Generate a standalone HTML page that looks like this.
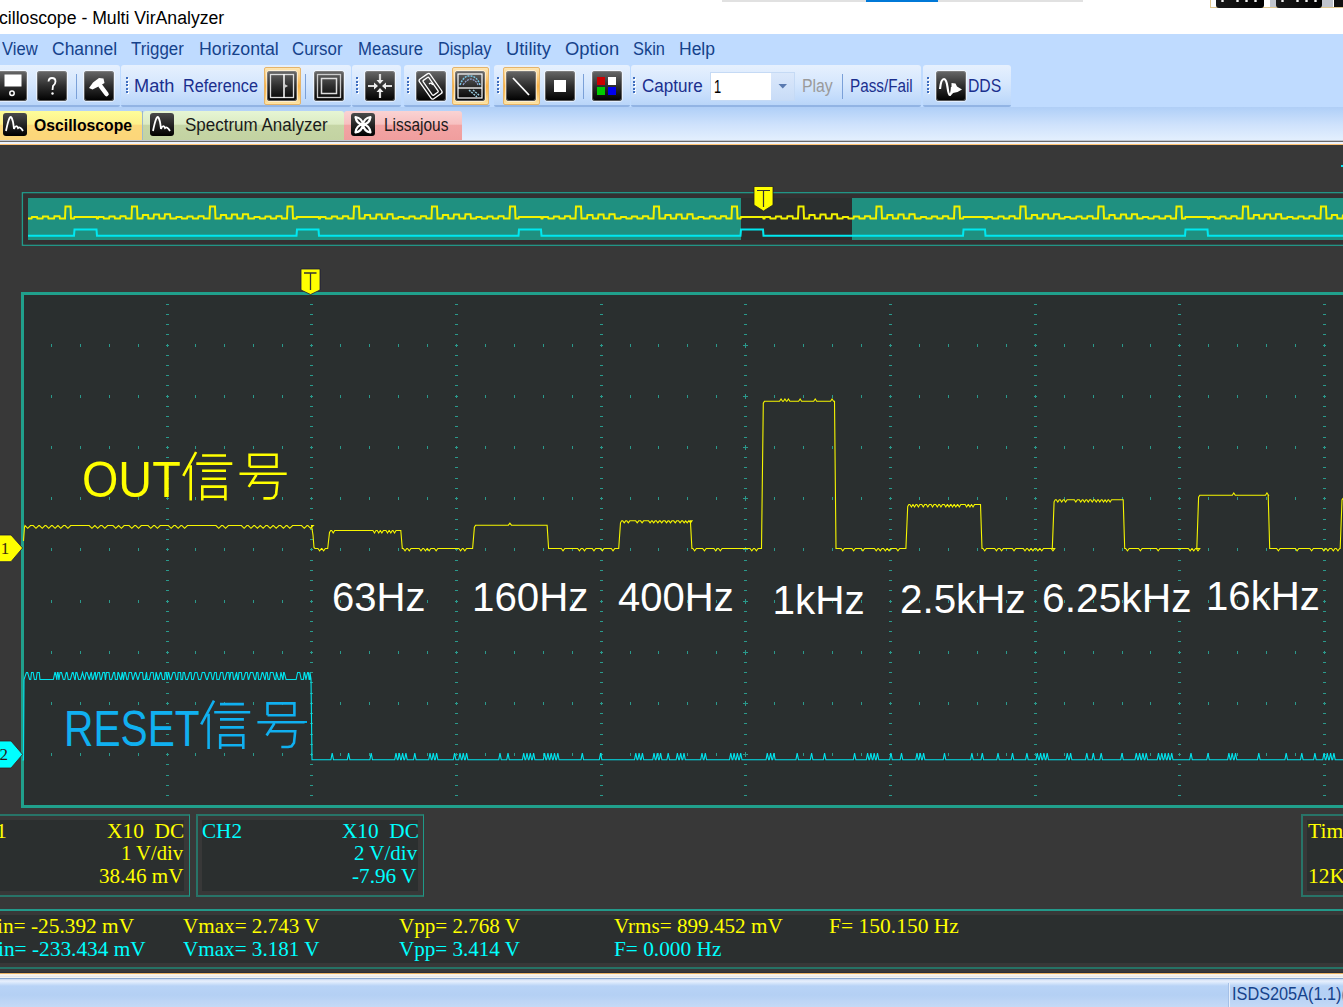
<!DOCTYPE html>
<html><head><meta charset="utf-8"><style>
html,body{margin:0;padding:0;}
body{width:1343px;height:1007px;overflow:hidden;position:relative;background:#fff;}
.t{position:absolute;white-space:nowrap;line-height:1;}
.r{position:absolute;}
</style></head><body>
<div class="t" style="left:-1.48px;top:8.56px;font-family:'Liberation Sans', sans-serif;font-size:18px;color:#000;transform:scaleX(0.9803);transform-origin:0 0;">cilloscope - Multi VirAnalyzer</div><div class="r" style="left:722px;top:0px;width:361px;height:2px;background:#e1e1e1;"></div><div class="r" style="left:866px;top:0px;width:72px;height:2px;background:#0078d7;"></div><div class="r" style="left:1210px;top:0px;width:133px;height:8px;background:#fff;border:1px solid #e0c890;border-top:none;box-sizing:border-box"></div><div class="r" style="left:1216px;top:0px;width:48px;height:8px;background:linear-gradient(90deg,#1a1a1a,#000);border-radius:0 0 3px 3px"></div><div class="r" style="left:1270px;top:0px;width:6px;height:7px;background:#c0c4cc;"></div><div class="r" style="left:1276px;top:0px;width:46px;height:8px;background:linear-gradient(90deg,#1a1a1a,#000);border-radius:0 0 3px 3px"></div><div class="r" style="left:1322px;top:0px;width:11px;height:7px;background:#c0c4cc;"></div><div class="r" style="left:1334px;top:0px;width:9px;height:7px;background:#111;"></div><div class="r" style="left:1220.5px;top:0px;width:3px;height:2px;background:#fff;border-radius:50%"></div><div class="r" style="left:1235.5px;top:0px;width:3px;height:2px;background:#fff;border-radius:50%"></div><div class="r" style="left:1244.5px;top:0px;width:3px;height:2px;background:#fff;border-radius:50%"></div><div class="r" style="left:1253.5px;top:0px;width:3px;height:2px;background:#fff;border-radius:50%"></div><div class="r" style="left:1280.5px;top:0px;width:3px;height:2px;background:#fff;border-radius:50%"></div><div class="r" style="left:1295.5px;top:0px;width:3px;height:2px;background:#fff;border-radius:50%"></div><div class="r" style="left:1304.5px;top:0px;width:3px;height:2px;background:#fff;border-radius:50%"></div><div class="r" style="left:1313.5px;top:0px;width:3px;height:2px;background:#fff;border-radius:50%"></div><div class="r" style="left:0px;top:34px;width:1343px;height:31px;background:#bfdbff;"></div><div class="t" style="left:2px;top:41.39px;font-family:'Liberation Sans', sans-serif;font-size:17.5px;color:#15428b;transform:scaleX(0.9474);transform-origin:0 0;">View</div><div class="t" style="left:52px;top:41.39px;font-family:'Liberation Sans', sans-serif;font-size:17.5px;color:#15428b;">Channel</div><div class="t" style="left:131px;top:41.39px;font-family:'Liberation Sans', sans-serif;font-size:17.5px;color:#15428b;transform:scaleX(0.9636);transform-origin:0 0;">Trigger</div><div class="t" style="left:198.99px;top:41.39px;font-family:'Liberation Sans', sans-serif;font-size:17.5px;color:#15428b;transform:scaleX(1.0130);transform-origin:0 0;">Horizontal</div><div class="t" style="left:292.04px;top:41.39px;font-family:'Liberation Sans', sans-serif;font-size:17.5px;color:#15428b;transform:scaleX(0.9615);transform-origin:0 0;">Cursor</div><div class="t" style="left:358.05px;top:41.39px;font-family:'Liberation Sans', sans-serif;font-size:17.5px;color:#15428b;transform:scaleX(0.9545);transform-origin:0 0;">Measure</div><div class="t" style="left:438.07px;top:41.39px;font-family:'Liberation Sans', sans-serif;font-size:17.5px;color:#15428b;transform:scaleX(0.9298);transform-origin:0 0;">Display</div><div class="t" style="left:505.95px;top:41.39px;font-family:'Liberation Sans', sans-serif;font-size:17.5px;color:#15428b;transform:scaleX(1.0476);transform-origin:0 0;">Utility</div><div class="t" style="left:564.95px;top:41.39px;font-family:'Liberation Sans', sans-serif;font-size:17.5px;color:#15428b;transform:scaleX(1.0500);transform-origin:0 0;">Option</div><div class="t" style="left:633.06px;top:41.39px;font-family:'Liberation Sans', sans-serif;font-size:17.5px;color:#15428b;transform:scaleX(0.9375);transform-origin:0 0;">Skin</div><div class="t" style="left:679px;top:41.39px;font-family:'Liberation Sans', sans-serif;font-size:17.5px;color:#15428b;">Help</div><div class="r" style="left:0px;top:65px;width:1343px;height:45px;background:#bfdbff;"></div><div class="r" style="left:-6px;top:65px;width:126px;height:41px;background:linear-gradient(#e6f0fe,#d6e7fd 45%,#c0dafb 85%,#b8d4f8);border-radius:3px"></div><div class="r" style="left:-6px;top:105px;width:126px;height:2px;background:#92b4e4;border-radius:0 0 3px 3px"></div><div class="r" style="left:121px;top:65px;width:230px;height:41px;background:linear-gradient(#e6f0fe,#d6e7fd 45%,#c0dafb 85%,#b8d4f8);border-radius:3px"></div><div class="r" style="left:121px;top:105px;width:230px;height:2px;background:#92b4e4;border-radius:0 0 3px 3px"></div><div class="r" style="left:352px;top:65px;width:49px;height:41px;background:linear-gradient(#e6f0fe,#d6e7fd 45%,#c0dafb 85%,#b8d4f8);border-radius:3px"></div><div class="r" style="left:352px;top:105px;width:49px;height:2px;background:#92b4e4;border-radius:0 0 3px 3px"></div><div class="r" style="left:404px;top:65px;width:86px;height:41px;background:linear-gradient(#e6f0fe,#d6e7fd 45%,#c0dafb 85%,#b8d4f8);border-radius:3px"></div><div class="r" style="left:404px;top:105px;width:86px;height:2px;background:#92b4e4;border-radius:0 0 3px 3px"></div><div class="r" style="left:494px;top:65px;width:136px;height:41px;background:linear-gradient(#e6f0fe,#d6e7fd 45%,#c0dafb 85%,#b8d4f8);border-radius:3px"></div><div class="r" style="left:494px;top:105px;width:136px;height:2px;background:#92b4e4;border-radius:0 0 3px 3px"></div><div class="r" style="left:631px;top:65px;width:290px;height:41px;background:linear-gradient(#e6f0fe,#d6e7fd 45%,#c0dafb 85%,#b8d4f8);border-radius:3px"></div><div class="r" style="left:631px;top:105px;width:290px;height:2px;background:#92b4e4;border-radius:0 0 3px 3px"></div><div class="r" style="left:923px;top:65px;width:88px;height:41px;background:linear-gradient(#e6f0fe,#d6e7fd 45%,#c0dafb 85%,#b8d4f8);border-radius:3px"></div><div class="r" style="left:923px;top:105px;width:88px;height:2px;background:#92b4e4;border-radius:0 0 3px 3px"></div><div class="r" style="left:126px;top:77px;width:2px;height:2px;background:#3f6ec0;box-shadow:1px 1px 0 #fff"></div><div class="r" style="left:126px;top:80.6px;width:2px;height:2px;background:#3f6ec0;box-shadow:1px 1px 0 #fff"></div><div class="r" style="left:126px;top:84.2px;width:2px;height:2px;background:#3f6ec0;box-shadow:1px 1px 0 #fff"></div><div class="r" style="left:126px;top:87.8px;width:2px;height:2px;background:#3f6ec0;box-shadow:1px 1px 0 #fff"></div><div class="r" style="left:126px;top:91.4px;width:2px;height:2px;background:#3f6ec0;box-shadow:1px 1px 0 #fff"></div><div class="r" style="left:356px;top:77px;width:2px;height:2px;background:#3f6ec0;box-shadow:1px 1px 0 #fff"></div><div class="r" style="left:356px;top:80.6px;width:2px;height:2px;background:#3f6ec0;box-shadow:1px 1px 0 #fff"></div><div class="r" style="left:356px;top:84.2px;width:2px;height:2px;background:#3f6ec0;box-shadow:1px 1px 0 #fff"></div><div class="r" style="left:356px;top:87.8px;width:2px;height:2px;background:#3f6ec0;box-shadow:1px 1px 0 #fff"></div><div class="r" style="left:356px;top:91.4px;width:2px;height:2px;background:#3f6ec0;box-shadow:1px 1px 0 #fff"></div><div class="r" style="left:407px;top:77px;width:2px;height:2px;background:#3f6ec0;box-shadow:1px 1px 0 #fff"></div><div class="r" style="left:407px;top:80.6px;width:2px;height:2px;background:#3f6ec0;box-shadow:1px 1px 0 #fff"></div><div class="r" style="left:407px;top:84.2px;width:2px;height:2px;background:#3f6ec0;box-shadow:1px 1px 0 #fff"></div><div class="r" style="left:407px;top:87.8px;width:2px;height:2px;background:#3f6ec0;box-shadow:1px 1px 0 #fff"></div><div class="r" style="left:407px;top:91.4px;width:2px;height:2px;background:#3f6ec0;box-shadow:1px 1px 0 #fff"></div><div class="r" style="left:497px;top:77px;width:2px;height:2px;background:#3f6ec0;box-shadow:1px 1px 0 #fff"></div><div class="r" style="left:497px;top:80.6px;width:2px;height:2px;background:#3f6ec0;box-shadow:1px 1px 0 #fff"></div><div class="r" style="left:497px;top:84.2px;width:2px;height:2px;background:#3f6ec0;box-shadow:1px 1px 0 #fff"></div><div class="r" style="left:497px;top:87.8px;width:2px;height:2px;background:#3f6ec0;box-shadow:1px 1px 0 #fff"></div><div class="r" style="left:497px;top:91.4px;width:2px;height:2px;background:#3f6ec0;box-shadow:1px 1px 0 #fff"></div><div class="r" style="left:633px;top:77px;width:2px;height:2px;background:#3f6ec0;box-shadow:1px 1px 0 #fff"></div><div class="r" style="left:633px;top:80.6px;width:2px;height:2px;background:#3f6ec0;box-shadow:1px 1px 0 #fff"></div><div class="r" style="left:633px;top:84.2px;width:2px;height:2px;background:#3f6ec0;box-shadow:1px 1px 0 #fff"></div><div class="r" style="left:633px;top:87.8px;width:2px;height:2px;background:#3f6ec0;box-shadow:1px 1px 0 #fff"></div><div class="r" style="left:633px;top:91.4px;width:2px;height:2px;background:#3f6ec0;box-shadow:1px 1px 0 #fff"></div><div class="r" style="left:927px;top:77px;width:2px;height:2px;background:#3f6ec0;box-shadow:1px 1px 0 #fff"></div><div class="r" style="left:927px;top:80.6px;width:2px;height:2px;background:#3f6ec0;box-shadow:1px 1px 0 #fff"></div><div class="r" style="left:927px;top:84.2px;width:2px;height:2px;background:#3f6ec0;box-shadow:1px 1px 0 #fff"></div><div class="r" style="left:927px;top:87.8px;width:2px;height:2px;background:#3f6ec0;box-shadow:1px 1px 0 #fff"></div><div class="r" style="left:927px;top:91.4px;width:2px;height:2px;background:#3f6ec0;box-shadow:1px 1px 0 #fff"></div><div class="r" style="left:-3px;top:71px;width:30px;height:30px;border-radius:3px;background:linear-gradient(#686868,#2e2e2e 50%,#000);box-shadow:0 0 0 1px rgba(140,140,140,.6) inset, 0 0 0 1px rgba(255,255,255,.55)"><svg width="30" height="30" style="position:absolute;left:0;top:0"><rect x="7.5" y="3.5" width="17" height="12" fill="#fff"/><circle cx="15" cy="22.3" r="2.2" fill="none" stroke="#fff" stroke-width="1.5"/></svg></div><div class="r" style="left:37px;top:71px;width:30px;height:30px;border-radius:3px;background:linear-gradient(#686868,#2e2e2e 50%,#000);box-shadow:0 0 0 1px rgba(140,140,140,.6) inset, 0 0 0 1px rgba(255,255,255,.55)"><svg width="30" height="30" style="position:absolute;left:0;top:0"><path d="M11.5 10.5 Q11.8 7 15 7 Q18.5 7 18.5 10.5 Q18.5 13 16 15 L15.5 19" fill="none" stroke="#fff" stroke-width="1.8"/><circle cx="15.5" cy="22.5" r="1.2" fill="#fff"/></svg></div><div class="r" style="left:75.5px;top:74px;width:1px;height:25px;background:#7aa0d8;"></div><div class="r" style="left:84px;top:71px;width:30px;height:30px;border-radius:3px;background:linear-gradient(#686868,#2e2e2e 50%,#000);box-shadow:0 0 0 1px rgba(140,140,140,.6) inset, 0 0 0 1px rgba(255,255,255,.55)"><svg width="30" height="30" style="position:absolute;left:0;top:0"><path d="M5 17 L9 11.5 L15 7 L19.5 7.5 L20.5 12 L14.5 15.5 L8.5 18.5 Z" fill="#fff"/><path d="M16.5 15 L22.5 23" stroke="#fff" stroke-width="4.5" stroke-linecap="round"/></svg></div><div class="t" style="left:134.36px;top:78.19px;font-family:'Liberation Sans', sans-serif;font-size:17.5px;color:#1b2f8e;transform:scaleX(1.0378);transform-origin:0 0;">Math</div><div class="t" style="left:183.47px;top:78.19px;font-family:'Liberation Sans', sans-serif;font-size:17.5px;color:#1b2f8e;transform:scaleX(0.9278);transform-origin:0 0;">Reference</div><div class="r" style="left:264px;top:67px;width:37px;height:38px;background:linear-gradient(#fde6b4,#fbc36a 35%,#f9b246 50%,#fbc768 75%,#fde4a6);border:1px solid #e6b46a;box-sizing:border-box;border-radius:2px"></div><div class="r" style="left:267px;top:71px;width:30px;height:30px;border-radius:3px;background:linear-gradient(#686868,#2e2e2e 50%,#000);box-shadow:0 0 0 1px rgba(140,140,140,.6) inset, 0 0 0 1px rgba(255,255,255,.55)"><svg width="30" height="30" style="position:absolute;left:0;top:0"><rect x="3.5" y="3.5" width="23" height="23" fill="none" stroke="#ddd" stroke-width="1.3"/><line x1="17" y1="3" x2="17" y2="27" stroke="#fff" stroke-width="1.5"/><path d="M17.5 13 L21 15 L17.5 17Z" fill="#ccc"/></svg></div><div class="r" style="left:305px;top:74px;width:1px;height:25px;background:#7aa0d8;"></div><div class="r" style="left:314px;top:71px;width:30px;height:30px;border-radius:3px;background:linear-gradient(#686868,#2e2e2e 50%,#000);box-shadow:0 0 0 1px rgba(140,140,140,.6) inset, 0 0 0 1px rgba(255,255,255,.55)"><svg width="30" height="30" style="position:absolute;left:0;top:0"><rect x="3.5" y="3.5" width="23" height="23" fill="none" stroke="#ccc" stroke-width="1.3"/><rect x="7.5" y="7.5" width="15" height="15" fill="none" stroke="#ddd" stroke-width="1.5"/></svg></div><div class="r" style="left:365px;top:71px;width:30px;height:30px;border-radius:3px;background:linear-gradient(#686868,#2e2e2e 50%,#000);box-shadow:0 0 0 1px rgba(140,140,140,.6) inset, 0 0 0 1px rgba(255,255,255,.55)"><svg width="30" height="30" style="position:absolute;left:0;top:0"><path d="M15 3 V10 M15 27 V20 M3 15 H10 M27 15 H20" stroke="#ddd" stroke-width="2.2"/><path d="M11.5 9 L15 13 L18.5 9Z M11.5 21 L15 17 L18.5 21Z M9 11.5 L13 15 L9 18.5Z M21 11.5 L17 15 L21 18.5Z" fill="#eee"/></svg></div><div class="r" style="left:416px;top:71px;width:30px;height:30px;border-radius:3px;background:linear-gradient(#686868,#2e2e2e 50%,#000);box-shadow:0 0 0 1px rgba(140,140,140,.6) inset, 0 0 0 1px rgba(255,255,255,.55)"><svg width="30" height="30" style="position:absolute;left:0;top:0" stroke="#fff" stroke-width="1.3" fill="none"><rect x="8" y="3" width="13" height="24" rx="2" transform="rotate(-35 15 15)"/><rect x="11" y="6" width="7" height="18" rx="1" transform="rotate(-35 15 15)"/><path d="M13 13 Q15 11 17 14" /></svg></div><div class="r" style="left:452px;top:67px;width:37px;height:38px;background:linear-gradient(#fde6b4,#fbc36a 35%,#f9b246 50%,#fbc768 75%,#fde4a6);border:1px solid #e6b46a;box-sizing:border-box;border-radius:2px"></div><div class="r" style="left:455px;top:71px;width:30px;height:30px;border-radius:3px;background:linear-gradient(#686868,#2e2e2e 50%,#000);box-shadow:0 0 0 1px rgba(140,140,140,.6) inset, 0 0 0 1px rgba(255,255,255,.55)"><svg width="30" height="30" style="position:absolute;left:0;top:0"><rect x="3" y="3" width="24" height="24" fill="none" stroke="#fff" stroke-width="1.2"/><path d="M5 14 Q9 4 15 5 Q22 5 25 14" stroke="#7cc8e8" stroke-width="1.5" fill="none" stroke-dasharray="2 1"/><path d="M8 14 Q12 8 16 8 Q21 9 23 14" stroke="#9ad" stroke-width="1.2" fill="none" stroke-dasharray="2 1"/><line x1="3" y1="17" x2="27" y2="17" stroke="#fff" stroke-width="1.3"/><path d="M14 19 L22 26 M18 19 L25 25" stroke="#9cd" stroke-width="1.5" stroke-dasharray="2 1"/></svg></div><div class="r" style="left:503px;top:67px;width:37px;height:38px;background:linear-gradient(#fde6b4,#fbc36a 35%,#f9b246 50%,#fbc768 75%,#fde4a6);border:1px solid #e6b46a;box-sizing:border-box;border-radius:2px"></div><div class="r" style="left:506px;top:71px;width:30px;height:30px;border-radius:3px;background:linear-gradient(#686868,#2e2e2e 50%,#000);box-shadow:0 0 0 1px rgba(140,140,140,.6) inset, 0 0 0 1px rgba(255,255,255,.55)"><svg width="30" height="30" style="position:absolute;left:0;top:0"><line x1="7" y1="7" x2="23" y2="24" stroke="#fff" stroke-width="1.8"/></svg></div><div class="r" style="left:545px;top:71px;width:30px;height:30px;border-radius:3px;background:linear-gradient(#686868,#2e2e2e 50%,#000);box-shadow:0 0 0 1px rgba(140,140,140,.6) inset, 0 0 0 1px rgba(255,255,255,.55)"><svg width="30" height="30" style="position:absolute;left:0;top:0"><rect x="9" y="9" width="12" height="12" fill="#fff"/></svg></div><div class="r" style="left:583px;top:74px;width:1px;height:25px;background:#7aa0d8;"></div><div class="r" style="left:592px;top:71px;width:30px;height:30px;border-radius:3px;background:linear-gradient(#686868,#2e2e2e 50%,#000);box-shadow:0 0 0 1px rgba(140,140,140,.6) inset, 0 0 0 1px rgba(255,255,255,.55)"><svg width="30" height="30" style="position:absolute;left:0;top:0"><rect x="5" y="6" width="8" height="8" fill="#c00"/><rect x="16" y="6" width="8" height="8" fill="#fff"/><rect x="5" y="16" width="8" height="8" fill="#0c0"/><rect x="16" y="16" width="8" height="8" fill="#00e"/></svg></div><div class="t" style="left:642.02px;top:78.19px;font-family:'Liberation Sans', sans-serif;font-size:17.5px;color:#1b2f8e;transform:scaleX(0.9754);transform-origin:0 0;">Capture</div><div class="r" style="left:710px;top:72px;width:85px;height:29px;background:#fff;border:1px solid #c5daf5;box-sizing:border-box"></div><div class="r" style="left:771px;top:73px;width:23px;height:27px;background:linear-gradient(#dbe8fb,#c8dcf7);"></div><svg class="r" style="left:777px;top:82px" width="12" height="8"><path d="M1.5 2 H10 L5.75 6.5Z" fill="#5a7ab0"/></svg><div class="t" style="left:713.96px;top:78.69px;font-family:'Liberation Sans', sans-serif;font-size:17.5px;color:#000;transform:scaleX(0.7375);transform-origin:0 0;">1</div><div class="t" style="left:801.9px;top:78.19px;font-family:'Liberation Sans', sans-serif;font-size:17.5px;color:#9a9a9a;transform:scaleX(0.9030);transform-origin:0 0;">Play</div><div class="r" style="left:841.5px;top:74px;width:1px;height:25px;background:#7aa0d8;"></div><div class="t" style="left:850.13px;top:78.19px;font-family:'Liberation Sans', sans-serif;font-size:17.5px;color:#1b2f8e;transform:scaleX(0.8714);transform-origin:0 0;">Pass/Fail</div><div class="r" style="left:936px;top:71px;width:30px;height:30px;border-radius:3px;background:linear-gradient(#686868,#2e2e2e 50%,#000);box-shadow:0 0 0 1px rgba(140,140,140,.6) inset, 0 0 0 1px rgba(255,255,255,.55)"><svg width="30" height="30" style="position:absolute;left:0;top:0"><path d="M4 18 Q5 8 8 8 Q10.5 8.5 11.5 16 Q12.5 24 14 24 Q15.5 23 16 16" fill="none" stroke="#fff" stroke-width="2.2"/><path d="M15.5 12 L19.5 12.5 L21 15.5 L26 18.5 L21.5 21 L17 22 L15.5 24 Z" fill="#fff"/></svg></div><div class="t" style="left:967.8px;top:78.19px;font-family:'Liberation Sans', sans-serif;font-size:17.5px;color:#1b2f8e;transform:scaleX(0.9000);transform-origin:0 0;">DDS</div><div class="r" style="left:0px;top:107px;width:1343px;height:33px;background:linear-gradient(#b0cef6 0px,#b4d2f8 3px,#cfe2fc 18px,#e3effe 33px);"></div><div class="r" style="left:-4px;top:111px;width:146px;height:29px;background:linear-gradient(#fefd9a,#fdf08a 45%,#fcd97a 50%,#fcd67a);border-radius:3px 3px 0 0"></div><div class="r" style="left:142px;top:111px;width:1px;height:29px;background:#9cb8cc;"></div><div class="r" style="left:143px;top:111px;width:201px;height:29px;background:linear-gradient(#e6f6d4,#dcebc4 45%,#c6d6a6 50%,#c3d3a2);border-radius:3px 3px 0 0"></div><div class="r" style="left:344px;top:111px;width:118px;height:29px;background:linear-gradient(#fad3d3,#f7c0c0 45%,#f2a4a4 50%,#f09e9e);border-radius:3px 3px 0 0"></div><div class="r" style="left:3px;top:113px;width:24px;height:23px;border-radius:3px;background:linear-gradient(#4a4a4a,#000)"><svg width="24" height="23" style="position:absolute;left:0;top:0"><path d="M3 18 Q6 3 8 4 Q10 6 11 16 Q13 11 15 15 Q17 13 20 18" fill="none" stroke="#fff" stroke-width="1.8"/></svg></div><div class="r" style="left:149.5px;top:113px;width:24px;height:23px;border-radius:3px;background:linear-gradient(#4a4a4a,#000)"><svg width="24" height="23" style="position:absolute;left:0;top:0"><path d="M3 18 Q6 3 8 4 Q10 6 11 16 Q13 11 15 15 Q17 13 20 18" fill="none" stroke="#fff" stroke-width="1.8"/></svg></div><div class="r" style="left:351px;top:113px;width:24px;height:23px;border-radius:3px;background:linear-gradient(#4a4a4a,#000)"><svg width="24" height="23" style="position:absolute;left:0;top:0" fill="none" stroke="#fff" stroke-width="2.2" stroke-linejoin="round"><path d="M4.5 4 Q11 5 12 11.5 Q5.5 11 4.5 4Z M19.5 4 Q13 5 12 11.5 Q18.5 11 19.5 4Z M4.5 19.5 Q11 18.5 12 11.5 Q5.5 12 4.5 19.5Z M19.5 19.5 Q13 18.5 12 11.5 Q18.5 12 19.5 19.5Z"/></svg></div><div class="t" style="left:33.65px;top:116.63px;font-family:'Liberation Sans', sans-serif;font-size:16.5px;color:#000;font-weight:bold;transform:scaleX(0.9545);transform-origin:0 0;">Oscilloscope</div><div class="t" style="left:184.83px;top:116.69px;font-family:'Liberation Sans', sans-serif;font-size:17.5px;color:#1a1a1a;transform:scaleX(0.9705);transform-origin:0 0;">Spectrum Analyzer</div><div class="t" style="left:384.32px;top:116.69px;font-family:'Liberation Sans', sans-serif;font-size:17.5px;color:#1a1a1a;transform:scaleX(0.8826);transform-origin:0 0;">Lissajous</div><div class="r" style="left:0px;top:140px;width:1343px;height:1px;background:#c0c6d0;"></div><div class="r" style="left:0px;top:141px;width:1343px;height:1px;background:#6a6a6a;"></div><div class="r" style="left:0px;top:142px;width:1343px;height:2px;background:#eef3fb;"></div><div class="r" style="left:0px;top:144px;width:1343px;height:1px;background:#fdc070;"></div><div class="r" style="left:0px;top:145px;width:1343px;height:828px;background:#383838;"></div><div class="r" style="left:0px;top:972px;width:1343px;height:1px;background:#2a2e38;"></div><div class="r" style="left:0px;top:973px;width:1343px;height:1px;background:#e8b060;"></div><div class="r" style="left:0px;top:974px;width:1343px;height:4px;background:linear-gradient(#fff4dc,#f2f2f2,#e6e6e6,#fcfcf4);"></div><div class="r" style="left:0px;top:978px;width:1343px;height:1px;background:#8aa8d0;"></div><div class="r" style="left:0px;top:979px;width:1343px;height:28px;background:linear-gradient(#c4d4ec 0px,#e8f0fd 2px,#d6e6fb 4px,#b8d3f6 7px,#b4d0f4 16px,#c4d9f6 28px);"></div><div class="r" style="left:1229px;top:983px;width:1px;height:24px;background:#e6effc;box-shadow:-1px 0 0 #a5c0e6"></div><div class="t" style="left:1231.64px;top:985.69px;font-family:'Liberation Sans', sans-serif;font-size:17.5px;color:#15428b;transform:scaleX(0.9300);transform-origin:0 0;">ISDS205A(1.1)(</div><svg class="r" style="left:0;top:0" width="1343" height="1007"><rect x="22.5" y="192.8" width="1400" height="52.4" fill="none" stroke="#229a8a" stroke-width="1.5"/><rect x="23.2" y="193.5" width="1400" height="51" fill="#333031"/><rect x="28" y="198" width="1320" height="42" fill="#1f9080"/><rect x="741" y="198" width="111" height="42" fill="#2b2f2f"/><path d="M28 218.6 L28.5 218.6 L29 218.6 L29.5 218.6 L30 218.6 L30.5 218.6 L31 218.6 L31.5 218.6 L32 217.1 L32.5 217.1 L33 217.1 L33.5 217.1 L34 217.1 L34.5 217.1 L35 217.1 L35.5 217.1 L36 217.1 L36.5 217.1 L37 217.1 L37.5 218.6 L38 218.6 L38.5 218.6 L39 218.6 L39.5 218.6 L40 218.6 L40.5 218.6 L41 218.6 L41.5 218.6 L42 218.6 L42.5 218.6 L43 216.6 L43.5 216.6 L44 216.6 L44.5 216.6 L45 216.6 L45.5 216.6 L46 216.6 L46.5 216.6 L47 216.6 L47.5 216.6 L48 216.6 L48.5 218.6 L49 218.6 L49.5 218.6 L50 218.6 L50.5 218.6 L51 218.6 L51.5 218.6 L52 218.6 L52.5 218.6 L53 218.6 L53.5 218.6 L54 218.6 L54.5 216.2 L55 216.2 L55.5 216.2 L56 216.2 L56.5 216.2 L57 216.2 L57.5 216.2 L58 216.2 L58.5 216.2 L59 216.2 L59.5 216.2 L60 218.6 L60.5 218.6 L61 218.6 L61.5 218.6 L62 218.6 L62.5 218.6 L63 218.6 L63.5 218.6 L64 218.6 L64.5 218.6 L65 218.6 L65.5 206.6 L66 206.6 L66.5 206.6 L67 206.6 L67.5 206.6 L68 206.6 L68.5 206.6 L69 206.6 L69.5 206.6 L70 206.6 L70.5 206.6 L71 218.6 L71.5 218.6 L72 218.6 L72.5 218.6 L73 218.6 L73.5 218.6 L74 218.6 L74.5 217.1 L75 217.1 L75.5 217.1 L76 217.1 L76.5 217.1 L77 217.1 L77.5 217.1 L78 217.1 L78.5 217.1 L79 217.1 L79.5 217.1 L80 217.1 L80.5 217.1 L81 217.1 L81.5 217.1 L82 217.1 L82.5 217.1 L83 217.1 L83.5 217.1 L84 217.1 L84.5 217.1 L85 217.1 L85.5 217.1 L86 217.1 L86.5 217.1 L87 217.1 L87.5 217.1 L88 217.1 L88.5 217.1 L89 217.1 L89.5 217.1 L90 217.1 L90.5 217.1 L91 217.1 L91.5 217.1 L92 217.1 L92.5 217.1 L93 217.1 L93.5 217.1 L94 217.1 L94.5 217.1 L95 217.1 L95.5 217.1 L96 217.1 L96.5 217.1 L97 218.6 L97.5 218.6 L98 218.6 L98.5 217.1 L99 217.1 L99.5 217.1 L100 217.1 L100.5 217.1 L101 217.1 L101.5 217.1 L102 217.1 L102.5 217.1 L103 217.1 L103.5 217.1 L104 218.6 L104.5 218.6 L105 218.6 L105.5 218.6 L106 218.6 L106.5 218.6 L107 218.6 L107.5 218.6 L108 218.6 L108.5 218.6 L109 218.6 L109.5 216.6 L110 216.6 L110.5 216.6 L111 216.6 L111.5 216.6 L112 216.6 L112.5 216.6 L113 216.6 L113.5 216.6 L114 216.6 L114.5 216.6 L115 218.6 L115.5 218.6 L116 218.6 L116.5 218.6 L117 218.6 L117.5 218.6 L118 218.6 L118.5 218.6 L119 218.6 L119.5 218.6 L120 218.6 L120.5 216.2 L121 216.2 L121.5 216.2 L122 216.2 L122.5 216.2 L123 216.2 L123.5 216.2 L124 216.2 L124.5 216.2 L125 216.2 L125.5 216.2 L126 218.6 L126.5 218.6 L127 218.6 L127.5 218.6 L128 218.6 L128.5 218.6 L129 218.6 L129.5 218.6 L130 218.6 L130.5 218.6 L131 218.6 L131.5 218.6 L132 206.6 L132.5 206.6 L133 206.6 L133.5 206.6 L134 206.6 L134.5 206.6 L135 206.6 L135.5 206.6 L136 206.6 L136.5 206.6 L137 206.6 L137.5 218.6 L138 218.6 L138.5 218.6 L139 218.6 L139.5 218.6 L140 218.6 L140.5 218.6 L141 218.6 L141.5 218.6 L142 218.6 L142.5 218.6 L143 214.9 L143.5 214.9 L144 214.9 L144.5 214.9 L145 214.9 L145.5 214.9 L146 214.9 L146.5 214.9 L147 214.9 L147.5 214.9 L148 214.9 L148.5 218.6 L149 218.6 L149.5 218.6 L150 218.6 L150.5 218.6 L151 218.6 L151.5 218.6 L152 218.6 L152.5 218.6 L153 218.6 L153.5 218.6 L154 214.6 L154.5 214.6 L155 214.6 L155.5 214.6 L156 214.6 L156.5 214.6 L157 214.6 L157.5 214.6 L158 214.6 L158.5 214.6 L159 214.6 L159.5 218.6 L160 218.6 L160.5 218.6 L161 218.6 L161.5 218.6 L162 218.6 L162.5 218.6 L163 218.6 L163.5 218.6 L164 218.6 L164.5 218.6 L165 214.2 L165.5 214.2 L166 214.2 L166.5 214.2 L167 214.2 L167.5 214.2 L168 214.2 L168.5 214.2 L169 214.2 L169.5 214.2 L170 214.2 L170.5 218.6 L171 218.6 L171.5 218.6 L172 218.6 L172.5 218.6 L173 218.6 L173.5 218.6 L174 218.6 L174.5 218.6 L175 218.6 L175.5 218.6 L176 218.6 L176.5 217.1 L177 217.1 L177.5 217.1 L178 217.1 L178.5 217.1 L179 217.1 L179.5 217.1 L180 217.1 L180.5 217.1 L181 217.1 L181.5 217.1 L182 218.6 L182.5 218.6 L183 218.6 L183.5 218.6 L184 218.6 L184.5 218.6 L185 218.6 L185.5 218.6 L186 218.6 L186.5 218.6 L187 218.6 L187.5 216.6 L188 216.6 L188.5 216.6 L189 216.6 L189.5 216.6 L190 216.6 L190.5 216.6 L191 216.6 L191.5 216.6 L192 216.6 L192.5 216.6 L193 218.6 L193.5 218.6 L194 218.6 L194.5 218.6 L195 218.6 L195.5 218.6 L196 218.6 L196.5 218.6 L197 218.6 L197.5 218.6 L198 218.6 L198.5 216.2 L199 216.2 L199.5 216.2 L200 216.2 L200.5 216.2 L201 216.2 L201.5 216.2 L202 216.2 L202.5 216.2 L203 216.2 L203.5 216.2 L204 218.6 L204.5 218.6 L205 218.6 L205.5 218.6 L206 218.6 L206.5 218.6 L207 218.6 L207.5 218.6 L208 218.6 L208.5 218.6 L209 218.6 L209.5 218.6 L210 206.6 L210.5 206.6 L211 206.6 L211.5 206.6 L212 206.6 L212.5 206.6 L213 206.6 L213.5 206.6 L214 206.6 L214.5 206.6 L215 206.6 L215.5 218.6 L216 218.6 L216.5 218.6 L217 218.6 L217.5 218.6 L218 218.6 L218.5 218.6 L219 218.6 L219.5 218.6 L220 218.6 L220.5 218.6 L221 214.9 L221.5 214.9 L222 214.9 L222.5 214.9 L223 214.9 L223.5 214.9 L224 214.9 L224.5 214.9 L225 214.9 L225.5 214.9 L226 214.9 L226.5 218.6 L227 218.6 L227.5 218.6 L228 218.6 L228.5 218.6 L229 218.6 L229.5 218.6 L230 218.6 L230.5 218.6 L231 218.6 L231.5 218.6 L232 214.6 L232.5 214.6 L233 214.6 L233.5 214.6 L234 214.6 L234.5 214.6 L235 214.6 L235.5 214.6 L236 214.6 L236.5 214.6 L237 214.6 L237.5 218.6 L238 218.6 L238.5 218.6 L239 218.6 L239.5 218.6 L240 218.6 L240.5 218.6 L241 218.6 L241.5 218.6 L242 218.6 L242.5 218.6 L243 214.2 L243.5 214.2 L244 214.2 L244.5 214.2 L245 214.2 L245.5 214.2 L246 214.2 L246.5 214.2 L247 214.2 L247.5 214.2 L248 214.2 L248.5 218.6 L249 218.6 L249.5 218.6 L250 218.6 L250.5 218.6 L251 218.6 L251.5 218.6 L252 218.6 L252.5 218.6 L253 218.6 L253.5 218.6 L254 218.6 L254.5 217.1 L255 217.1 L255.5 217.1 L256 217.1 L256.5 217.1 L257 217.1 L257.5 217.1 L258 217.1 L258.5 217.1 L259 217.1 L259.5 217.1 L260 218.6 L260.5 218.6 L261 218.6 L261.5 218.6 L262 218.6 L262.5 218.6 L263 218.6 L263.5 218.6 L264 218.6 L264.5 218.6 L265 218.6 L265.5 216.6 L266 216.6 L266.5 216.6 L267 216.6 L267.5 216.6 L268 216.6 L268.5 216.6 L269 216.6 L269.5 216.6 L270 216.6 L270.5 216.6 L271 218.6 L271.5 218.6 L272 218.6 L272.5 218.6 L273 218.6 L273.5 218.6 L274 218.6 L274.5 218.6 L275 218.6 L275.5 218.6 L276 218.6 L276.5 216.2 L277 216.2 L277.5 216.2 L278 216.2 L278.5 216.2 L279 216.2 L279.5 216.2 L280 216.2 L280.5 216.2 L281 216.2 L281.5 216.2 L282 218.6 L282.5 218.6 L283 218.6 L283.5 218.6 L284 218.6 L284.5 218.6 L285 218.6 L285.5 218.6 L286 218.6 L286.5 218.6 L287 218.6 L287.5 206.6 L288 206.6 L288.5 206.6 L289 206.6 L289.5 206.6 L290 206.6 L290.5 206.6 L291 206.6 L291.5 206.6 L292 206.6 L292.5 206.6 L293 218.6 L293.5 218.6 L294 218.6 L294.5 218.6 L295 218.6 L295.5 218.6 L296 218.6 L296.5 218.6 L297 217.1 L297.5 217.1 L298 217.1 L298.5 217.1 L299 217.1 L299.5 217.1 L300 217.1 L300.5 217.1 L301 217.1 L301.5 217.1 L302 217.1 L302.5 217.1 L303 217.1 L303.5 217.1 L304 217.1 L304.5 217.1 L305 217.1 L305.5 217.1 L306 217.1 L306.5 217.1 L307 217.1 L307.5 217.1 L308 217.1 L308.5 217.1 L309 217.1 L309.5 217.1 L310 217.1 L310.5 217.1 L311 217.1 L311.5 217.1 L312 217.1 L312.5 217.1 L313 217.1 L313.5 217.1 L314 217.1 L314.5 217.1 L315 217.1 L315.5 217.1 L316 217.1 L316.5 217.1 L317 217.1 L317.5 217.1 L318 217.1 L318.5 217.1 L319 218.6 L319.5 218.6 L320 218.6 L320.5 217.1 L321 217.1 L321.5 217.1 L322 217.1 L322.5 217.1 L323 217.1 L323.5 217.1 L324 217.1 L324.5 217.1 L325 217.1 L325.5 217.1 L326 218.6 L326.5 218.6 L327 218.6 L327.5 218.6 L328 218.6 L328.5 218.6 L329 218.6 L329.5 218.6 L330 218.6 L330.5 218.6 L331 218.6 L331.5 218.6 L332 216.6 L332.5 216.6 L333 216.6 L333.5 216.6 L334 216.6 L334.5 216.6 L335 216.6 L335.5 216.6 L336 216.6 L336.5 216.6 L337 216.6 L337.5 218.6 L338 218.6 L338.5 218.6 L339 218.6 L339.5 218.6 L340 218.6 L340.5 218.6 L341 218.6 L341.5 218.6 L342 218.6 L342.5 218.6 L343 216.2 L343.5 216.2 L344 216.2 L344.5 216.2 L345 216.2 L345.5 216.2 L346 216.2 L346.5 216.2 L347 216.2 L347.5 216.2 L348 216.2 L348.5 218.6 L349 218.6 L349.5 218.6 L350 218.6 L350.5 218.6 L351 218.6 L351.5 218.6 L352 218.6 L352.5 218.6 L353 218.6 L353.5 218.6 L354 206.6 L354.5 206.6 L355 206.6 L355.5 206.6 L356 206.6 L356.5 206.6 L357 206.6 L357.5 206.6 L358 206.6 L358.5 206.6 L359 206.6 L359.5 218.6 L360 218.6 L360.5 218.6 L361 218.6 L361.5 218.6 L362 218.6 L362.5 218.6 L363 218.6 L363.5 218.6 L364 218.6 L364.5 218.6 L365 214.9 L365.5 214.9 L366 214.9 L366.5 214.9 L367 214.9 L367.5 214.9 L368 214.9 L368.5 214.9 L369 214.9 L369.5 214.9 L370 214.9 L370.5 218.6 L371 218.6 L371.5 218.6 L372 218.6 L372.5 218.6 L373 218.6 L373.5 218.6 L374 218.6 L374.5 218.6 L375 218.6 L375.5 218.6 L376 218.6 L376.5 214.6 L377 214.6 L377.5 214.6 L378 214.6 L378.5 214.6 L379 214.6 L379.5 214.6 L380 214.6 L380.5 214.6 L381 214.6 L381.5 214.6 L382 218.6 L382.5 218.6 L383 218.6 L383.5 218.6 L384 218.6 L384.5 218.6 L385 218.6 L385.5 218.6 L386 218.6 L386.5 218.6 L387 218.6 L387.5 214.2 L388 214.2 L388.5 214.2 L389 214.2 L389.5 214.2 L390 214.2 L390.5 214.2 L391 214.2 L391.5 214.2 L392 214.2 L392.5 214.2 L393 218.6 L393.5 218.6 L394 218.6 L394.5 218.6 L395 218.6 L395.5 218.6 L396 218.6 L396.5 218.6 L397 218.6 L397.5 218.6 L398 218.6 L398.5 217.1 L399 217.1 L399.5 217.1 L400 217.1 L400.5 217.1 L401 217.1 L401.5 217.1 L402 217.1 L402.5 217.1 L403 217.1 L403.5 217.1 L404 218.6 L404.5 218.6 L405 218.6 L405.5 218.6 L406 218.6 L406.5 218.6 L407 218.6 L407.5 218.6 L408 218.6 L408.5 218.6 L409 218.6 L409.5 216.6 L410 216.6 L410.5 216.6 L411 216.6 L411.5 216.6 L412 216.6 L412.5 216.6 L413 216.6 L413.5 216.6 L414 216.6 L414.5 216.6 L415 218.6 L415.5 218.6 L416 218.6 L416.5 218.6 L417 218.6 L417.5 218.6 L418 218.6 L418.5 218.6 L419 218.6 L419.5 218.6 L420 218.6 L420.5 218.6 L421 216.2 L421.5 216.2 L422 216.2 L422.5 216.2 L423 216.2 L423.5 216.2 L424 216.2 L424.5 216.2 L425 216.2 L425.5 216.2 L426 216.2 L426.5 218.6 L427 218.6 L427.5 218.6 L428 218.6 L428.5 218.6 L429 218.6 L429.5 218.6 L430 218.6 L430.5 218.6 L431 218.6 L431.5 218.6 L432 206.6 L432.5 206.6 L433 206.6 L433.5 206.6 L434 206.6 L434.5 206.6 L435 206.6 L435.5 206.6 L436 206.6 L436.5 206.6 L437 206.6 L437.5 218.6 L438 218.6 L438.5 218.6 L439 218.6 L439.5 218.6 L440 218.6 L440.5 218.6 L441 218.6 L441.5 218.6 L442 218.6 L442.5 218.6 L443 214.9 L443.5 214.9 L444 214.9 L444.5 214.9 L445 214.9 L445.5 214.9 L446 214.9 L446.5 214.9 L447 214.9 L447.5 214.9 L448 214.9 L448.5 218.6 L449 218.6 L449.5 218.6 L450 218.6 L450.5 218.6 L451 218.6 L451.5 218.6 L452 218.6 L452.5 218.6 L453 218.6 L453.5 218.6 L454 214.6 L454.5 214.6 L455 214.6 L455.5 214.6 L456 214.6 L456.5 214.6 L457 214.6 L457.5 214.6 L458 214.6 L458.5 214.6 L459 214.6 L459.5 218.6 L460 218.6 L460.5 218.6 L461 218.6 L461.5 218.6 L462 218.6 L462.5 218.6 L463 218.6 L463.5 218.6 L464 218.6 L464.5 218.6 L465 218.6 L465.5 214.2 L466 214.2 L466.5 214.2 L467 214.2 L467.5 214.2 L468 214.2 L468.5 214.2 L469 214.2 L469.5 214.2 L470 214.2 L470.5 214.2 L471 218.6 L471.5 218.6 L472 218.6 L472.5 218.6 L473 218.6 L473.5 218.6 L474 218.6 L474.5 218.6 L475 218.6 L475.5 218.6 L476 218.6 L476.5 217.1 L477 217.1 L477.5 217.1 L478 217.1 L478.5 217.1 L479 217.1 L479.5 217.1 L480 217.1 L480.5 217.1 L481 217.1 L481.5 217.1 L482 218.6 L482.5 218.6 L483 218.6 L483.5 218.6 L484 218.6 L484.5 218.6 L485 218.6 L485.5 218.6 L486 218.6 L486.5 218.6 L487 218.6 L487.5 216.6 L488 216.6 L488.5 216.6 L489 216.6 L489.5 216.6 L490 216.6 L490.5 216.6 L491 216.6 L491.5 216.6 L492 216.6 L492.5 216.6 L493 218.6 L493.5 218.6 L494 218.6 L494.5 218.6 L495 218.6 L495.5 218.6 L496 218.6 L496.5 218.6 L497 218.6 L497.5 218.6 L498 218.6 L498.5 216.2 L499 216.2 L499.5 216.2 L500 216.2 L500.5 216.2 L501 216.2 L501.5 216.2 L502 216.2 L502.5 216.2 L503 216.2 L503.5 216.2 L504 218.6 L504.5 218.6 L505 218.6 L505.5 218.6 L506 218.6 L506.5 218.6 L507 218.6 L507.5 218.6 L508 218.6 L508.5 218.6 L509 218.6 L509.5 218.6 L510 206.6 L510.5 206.6 L511 206.6 L511.5 206.6 L512 206.6 L512.5 206.6 L513 206.6 L513.5 206.6 L514 206.6 L514.5 206.6 L515 206.6 L515.5 218.6 L516 218.6 L516.5 218.6 L517 218.6 L517.5 218.6 L518 218.6 L518.5 218.6 L519 217.1 L519.5 217.1 L520 217.1 L520.5 217.1 L521 217.1 L521.5 217.1 L522 217.1 L522.5 217.1 L523 217.1 L523.5 217.1 L524 217.1 L524.5 217.1 L525 217.1 L525.5 217.1 L526 217.1 L526.5 217.1 L527 217.1 L527.5 217.1 L528 217.1 L528.5 217.1 L529 217.1 L529.5 217.1 L530 217.1 L530.5 217.1 L531 217.1 L531.5 217.1 L532 217.1 L532.5 217.1 L533 217.1 L533.5 217.1 L534 217.1 L534.5 217.1 L535 217.1 L535.5 217.1 L536 217.1 L536.5 217.1 L537 217.1 L537.5 217.1 L538 217.1 L538.5 217.1 L539 217.1 L539.5 217.1 L540 217.1 L540.5 217.1 L541 217.1 L541.5 218.6 L542 218.6 L542.5 218.6 L543 217.1 L543.5 217.1 L544 217.1 L544.5 217.1 L545 217.1 L545.5 217.1 L546 217.1 L546.5 217.1 L547 217.1 L547.5 217.1 L548 217.1 L548.5 218.6 L549 218.6 L549.5 218.6 L550 218.6 L550.5 218.6 L551 218.6 L551.5 218.6 L552 218.6 L552.5 218.6 L553 218.6 L553.5 218.6 L554 216.6 L554.5 216.6 L555 216.6 L555.5 216.6 L556 216.6 L556.5 216.6 L557 216.6 L557.5 216.6 L558 216.6 L558.5 216.6 L559 216.6 L559.5 218.6 L560 218.6 L560.5 218.6 L561 218.6 L561.5 218.6 L562 218.6 L562.5 218.6 L563 218.6 L563.5 218.6 L564 218.6 L564.5 218.6 L565 216.2 L565.5 216.2 L566 216.2 L566.5 216.2 L567 216.2 L567.5 216.2 L568 216.2 L568.5 216.2 L569 216.2 L569.5 216.2 L570 216.2 L570.5 218.6 L571 218.6 L571.5 218.6 L572 218.6 L572.5 218.6 L573 218.6 L573.5 218.6 L574 218.6 L574.5 218.6 L575 218.6 L575.5 218.6 L576 206.6 L576.5 206.6 L577 206.6 L577.5 206.6 L578 206.6 L578.5 206.6 L579 206.6 L579.5 206.6 L580 206.6 L580.5 206.6 L581 206.6 L581.5 218.6 L582 218.6 L582.5 218.6 L583 218.6 L583.5 218.6 L584 218.6 L584.5 218.6 L585 218.6 L585.5 218.6 L586 218.6 L586.5 218.6 L587 218.6 L587.5 214.9 L588 214.9 L588.5 214.9 L589 214.9 L589.5 214.9 L590 214.9 L590.5 214.9 L591 214.9 L591.5 214.9 L592 214.9 L592.5 214.9 L593 218.6 L593.5 218.6 L594 218.6 L594.5 218.6 L595 218.6 L595.5 218.6 L596 218.6 L596.5 218.6 L597 218.6 L597.5 218.6 L598 218.6 L598.5 214.6 L599 214.6 L599.5 214.6 L600 214.6 L600.5 214.6 L601 214.6 L601.5 214.6 L602 214.6 L602.5 214.6 L603 214.6 L603.5 214.6 L604 218.6 L604.5 218.6 L605 218.6 L605.5 218.6 L606 218.6 L606.5 218.6 L607 218.6 L607.5 218.6 L608 218.6 L608.5 218.6 L609 218.6 L609.5 214.2 L610 214.2 L610.5 214.2 L611 214.2 L611.5 214.2 L612 214.2 L612.5 214.2 L613 214.2 L613.5 214.2 L614 214.2 L614.5 214.2 L615 218.6 L615.5 218.6 L616 218.6 L616.5 218.6 L617 218.6 L617.5 218.6 L618 218.6 L618.5 218.6 L619 218.6 L619.5 218.6 L620 218.6 L620.5 218.6 L621 217.1 L621.5 217.1 L622 217.1 L622.5 217.1 L623 217.1 L623.5 217.1 L624 217.1 L624.5 217.1 L625 217.1 L625.5 217.1 L626 217.1 L626.5 218.6 L627 218.6 L627.5 218.6 L628 218.6 L628.5 218.6 L629 218.6 L629.5 218.6 L630 218.6 L630.5 218.6 L631 218.6 L631.5 218.6 L632 216.6 L632.5 216.6 L633 216.6 L633.5 216.6 L634 216.6 L634.5 216.6 L635 216.6 L635.5 216.6 L636 216.6 L636.5 216.6 L637 216.6 L637.5 218.6 L638 218.6 L638.5 218.6 L639 218.6 L639.5 218.6 L640 218.6 L640.5 218.6 L641 218.6 L641.5 218.6 L642 218.6 L642.5 218.6 L643 216.2 L643.5 216.2 L644 216.2 L644.5 216.2 L645 216.2 L645.5 216.2 L646 216.2 L646.5 216.2 L647 216.2 L647.5 216.2 L648 216.2 L648.5 218.6 L649 218.6 L649.5 218.6 L650 218.6 L650.5 218.6 L651 218.6 L651.5 218.6 L652 218.6 L652.5 218.6 L653 218.6 L653.5 218.6 L654 206.6 L654.5 206.6 L655 206.6 L655.5 206.6 L656 206.6 L656.5 206.6 L657 206.6 L657.5 206.6 L658 206.6 L658.5 206.6 L659 206.6 L659.5 218.6 L660 218.6 L660.5 218.6 L661 218.6 L661.5 218.6 L662 218.6 L662.5 218.6 L663 218.6 L663.5 218.6 L664 218.6 L664.5 218.6 L665 218.6 L665.5 214.9 L666 214.9 L666.5 214.9 L667 214.9 L667.5 214.9 L668 214.9 L668.5 214.9 L669 214.9 L669.5 214.9 L670 214.9 L670.5 214.9 L671 218.6 L671.5 218.6 L672 218.6 L672.5 218.6 L673 218.6 L673.5 218.6 L674 218.6 L674.5 218.6 L675 218.6 L675.5 218.6 L676 218.6 L676.5 214.6 L677 214.6 L677.5 214.6 L678 214.6 L678.5 214.6 L679 214.6 L679.5 214.6 L680 214.6 L680.5 214.6 L681 214.6 L681.5 214.6 L682 218.6 L682.5 218.6 L683 218.6 L683.5 218.6 L684 218.6 L684.5 218.6 L685 218.6 L685.5 218.6 L686 218.6 L686.5 218.6 L687 218.6 L687.5 214.2 L688 214.2 L688.5 214.2 L689 214.2 L689.5 214.2 L690 214.2 L690.5 214.2 L691 214.2 L691.5 214.2 L692 214.2 L692.5 214.2 L693 218.6 L693.5 218.6 L694 218.6 L694.5 218.6 L695 218.6 L695.5 218.6 L696 218.6 L696.5 218.6 L697 218.6 L697.5 218.6 L698 218.6 L698.5 217.1 L699 217.1 L699.5 217.1 L700 217.1 L700.5 217.1 L701 217.1 L701.5 217.1 L702 217.1 L702.5 217.1 L703 217.1 L703.5 217.1 L704 218.6 L704.5 218.6 L705 218.6 L705.5 218.6 L706 218.6 L706.5 218.6 L707 218.6 L707.5 218.6 L708 218.6 L708.5 218.6 L709 218.6 L709.5 218.6 L710 216.6 L710.5 216.6 L711 216.6 L711.5 216.6 L712 216.6 L712.5 216.6 L713 216.6 L713.5 216.6 L714 216.6 L714.5 216.6 L715 216.6 L715.5 218.6 L716 218.6 L716.5 218.6 L717 218.6 L717.5 218.6 L718 218.6 L718.5 218.6 L719 218.6 L719.5 218.6 L720 218.6 L720.5 218.6 L721 216.2 L721.5 216.2 L722 216.2 L722.5 216.2 L723 216.2 L723.5 216.2 L724 216.2 L724.5 216.2 L725 216.2 L725.5 216.2 L726 216.2 L726.5 218.6 L727 218.6 L727.5 218.6 L728 218.6 L728.5 218.6 L729 218.6 L729.5 218.6 L730 218.6 L730.5 218.6 L731 218.6 L731.5 218.6 L732 206.6 L732.5 206.6 L733 206.6 L733.5 206.6 L734 206.6 L734.5 206.6 L735 206.6 L735.5 206.6 L736 206.6 L736.5 206.6 L737 206.6 L737.5 218.6 L738 218.6 L738.5 218.6 L739 218.6 L739.5 218.6 L740 218.6 L740.5 218.6 L741 217.1 L741.5 217.1 L742 217.1 L742.5 217.1 L743 217.1 L743.5 217.1 L744 217.1 L744.5 217.1 L745 217.1 L745.5 217.1 L746 217.1 L746.5 217.1 L747 217.1 L747.5 217.1 L748 217.1 L748.5 217.1 L749 217.1 L749.5 217.1 L750 217.1 L750.5 217.1 L751 217.1 L751.5 217.1 L752 217.1 L752.5 217.1 L753 217.1 L753.5 217.1 L754 217.1 L754.5 217.1 L755 217.1 L755.5 217.1 L756 217.1 L756.5 217.1 L757 217.1 L757.5 217.1 L758 217.1 L758.5 217.1 L759 217.1 L759.5 217.1 L760 217.1 L760.5 217.1 L761 217.1 L761.5 217.1 L762 217.1 L762.5 217.1 L763 217.1 L763.5 218.6 L764 218.6 L764.5 218.6 L765 217.1 L765.5 217.1 L766 217.1 L766.5 217.1 L767 217.1 L767.5 217.1 L768 217.1 L768.5 217.1 L769 217.1 L769.5 217.1 L770 217.1 L770.5 218.6 L771 218.6 L771.5 218.6 L772 218.6 L772.5 218.6 L773 218.6 L773.5 218.6 L774 218.6 L774.5 218.6 L775 218.6 L775.5 218.6 L776 216.6 L776.5 216.6 L777 216.6 L777.5 216.6 L778 216.6 L778.5 216.6 L779 216.6 L779.5 216.6 L780 216.6 L780.5 216.6 L781 216.6 L781.5 218.6 L782 218.6 L782.5 218.6 L783 218.6 L783.5 218.6 L784 218.6 L784.5 218.6 L785 218.6 L785.5 218.6 L786 218.6 L786.5 218.6 L787 218.6 L787.5 216.2 L788 216.2 L788.5 216.2 L789 216.2 L789.5 216.2 L790 216.2 L790.5 216.2 L791 216.2 L791.5 216.2 L792 216.2 L792.5 216.2 L793 218.6 L793.5 218.6 L794 218.6 L794.5 218.6 L795 218.6 L795.5 218.6 L796 218.6 L796.5 218.6 L797 218.6 L797.5 218.6 L798 218.6 L798.5 206.6 L799 206.6 L799.5 206.6 L800 206.6 L800.5 206.6 L801 206.6 L801.5 206.6 L802 206.6 L802.5 206.6 L803 206.6 L803.5 206.6 L804 218.6 L804.5 218.6 L805 218.6 L805.5 218.6 L806 218.6 L806.5 218.6 L807 218.6 L807.5 218.6 L808 218.6 L808.5 218.6 L809 218.6 L809.5 214.9 L810 214.9 L810.5 214.9 L811 214.9 L811.5 214.9 L812 214.9 L812.5 214.9 L813 214.9 L813.5 214.9 L814 214.9 L814.5 214.9 L815 218.6 L815.5 218.6 L816 218.6 L816.5 218.6 L817 218.6 L817.5 218.6 L818 218.6 L818.5 218.6 L819 218.6 L819.5 218.6 L820 218.6 L820.5 214.6 L821 214.6 L821.5 214.6 L822 214.6 L822.5 214.6 L823 214.6 L823.5 214.6 L824 214.6 L824.5 214.6 L825 214.6 L825.5 214.6 L826 218.6 L826.5 218.6 L827 218.6 L827.5 218.6 L828 218.6 L828.5 218.6 L829 218.6 L829.5 218.6 L830 218.6 L830.5 218.6 L831 218.6 L831.5 218.6 L832 214.2 L832.5 214.2 L833 214.2 L833.5 214.2 L834 214.2 L834.5 214.2 L835 214.2 L835.5 214.2 L836 214.2 L836.5 214.2 L837 214.2 L837.5 218.6 L838 218.6 L838.5 218.6 L839 218.6 L839.5 218.6 L840 218.6 L840.5 218.6 L841 218.6 L841.5 218.6 L842 218.6 L842.5 218.6 L843 217.1 L843.5 217.1 L844 217.1 L844.5 217.1 L845 217.1 L845.5 217.1 L846 217.1 L846.5 217.1 L847 217.1 L847.5 217.1 L848 217.1 L848.5 218.6 L849 218.6 L849.5 218.6 L850 218.6 L850.5 218.6 L851 218.6 L851.5 218.6 L852 218.6 L852.5 218.6 L853 218.6 L853.5 218.6 L854 216.6 L854.5 216.6 L855 216.6 L855.5 216.6 L856 216.6 L856.5 216.6 L857 216.6 L857.5 216.6 L858 216.6 L858.5 216.6 L859 216.6 L859.5 218.6 L860 218.6 L860.5 218.6 L861 218.6 L861.5 218.6 L862 218.6 L862.5 218.6 L863 218.6 L863.5 218.6 L864 218.6 L864.5 218.6 L865 216.2 L865.5 216.2 L866 216.2 L866.5 216.2 L867 216.2 L867.5 216.2 L868 216.2 L868.5 216.2 L869 216.2 L869.5 216.2 L870 216.2 L870.5 218.6 L871 218.6 L871.5 218.6 L872 218.6 L872.5 218.6 L873 218.6 L873.5 218.6 L874 218.6 L874.5 218.6 L875 218.6 L875.5 218.6 L876 218.6 L876.5 206.6 L877 206.6 L877.5 206.6 L878 206.6 L878.5 206.6 L879 206.6 L879.5 206.6 L880 206.6 L880.5 206.6 L881 206.6 L881.5 206.6 L882 218.6 L882.5 218.6 L883 218.6 L883.5 218.6 L884 218.6 L884.5 218.6 L885 218.6 L885.5 218.6 L886 218.6 L886.5 218.6 L887 218.6 L887.5 214.9 L888 214.9 L888.5 214.9 L889 214.9 L889.5 214.9 L890 214.9 L890.5 214.9 L891 214.9 L891.5 214.9 L892 214.9 L892.5 214.9 L893 218.6 L893.5 218.6 L894 218.6 L894.5 218.6 L895 218.6 L895.5 218.6 L896 218.6 L896.5 218.6 L897 218.6 L897.5 218.6 L898 218.6 L898.5 214.6 L899 214.6 L899.5 214.6 L900 214.6 L900.5 214.6 L901 214.6 L901.5 214.6 L902 214.6 L902.5 214.6 L903 214.6 L903.5 214.6 L904 218.6 L904.5 218.6 L905 218.6 L905.5 218.6 L906 218.6 L906.5 218.6 L907 218.6 L907.5 218.6 L908 218.6 L908.5 218.6 L909 218.6 L909.5 214.2 L910 214.2 L910.5 214.2 L911 214.2 L911.5 214.2 L912 214.2 L912.5 214.2 L913 214.2 L913.5 214.2 L914 214.2 L914.5 214.2 L915 218.6 L915.5 218.6 L916 218.6 L916.5 218.6 L917 218.6 L917.5 218.6 L918 218.6 L918.5 218.6 L919 218.6 L919.5 218.6 L920 218.6 L920.5 218.6 L921 217.1 L921.5 217.1 L922 217.1 L922.5 217.1 L923 217.1 L923.5 217.1 L924 217.1 L924.5 217.1 L925 217.1 L925.5 217.1 L926 217.1 L926.5 218.6 L927 218.6 L927.5 218.6 L928 218.6 L928.5 218.6 L929 218.6 L929.5 218.6 L930 218.6 L930.5 218.6 L931 218.6 L931.5 218.6 L932 216.6 L932.5 216.6 L933 216.6 L933.5 216.6 L934 216.6 L934.5 216.6 L935 216.6 L935.5 216.6 L936 216.6 L936.5 216.6 L937 216.6 L937.5 218.6 L938 218.6 L938.5 218.6 L939 218.6 L939.5 218.6 L940 218.6 L940.5 218.6 L941 218.6 L941.5 218.6 L942 218.6 L942.5 218.6 L943 216.2 L943.5 216.2 L944 216.2 L944.5 216.2 L945 216.2 L945.5 216.2 L946 216.2 L946.5 216.2 L947 216.2 L947.5 216.2 L948 216.2 L948.5 218.6 L949 218.6 L949.5 218.6 L950 218.6 L950.5 218.6 L951 218.6 L951.5 218.6 L952 218.6 L952.5 218.6 L953 218.6 L953.5 218.6 L954 218.6 L954.5 206.6 L955 206.6 L955.5 206.6 L956 206.6 L956.5 206.6 L957 206.6 L957.5 206.6 L958 206.6 L958.5 206.6 L959 206.6 L959.5 206.6 L960 218.6 L960.5 218.6 L961 218.6 L961.5 218.6 L962 218.6 L962.5 218.6 L963 218.6 L963.5 217.1 L964 217.1 L964.5 217.1 L965 217.1 L965.5 217.1 L966 217.1 L966.5 217.1 L967 217.1 L967.5 217.1 L968 217.1 L968.5 217.1 L969 217.1 L969.5 217.1 L970 217.1 L970.5 217.1 L971 217.1 L971.5 217.1 L972 217.1 L972.5 217.1 L973 217.1 L973.5 217.1 L974 217.1 L974.5 217.1 L975 217.1 L975.5 217.1 L976 217.1 L976.5 217.1 L977 217.1 L977.5 217.1 L978 217.1 L978.5 217.1 L979 217.1 L979.5 217.1 L980 217.1 L980.5 217.1 L981 217.1 L981.5 217.1 L982 217.1 L982.5 217.1 L983 217.1 L983.5 217.1 L984 217.1 L984.5 217.1 L985 217.1 L985.5 218.6 L986 218.6 L986.5 218.6 L987 217.1 L987.5 217.1 L988 217.1 L988.5 217.1 L989 217.1 L989.5 217.1 L990 217.1 L990.5 217.1 L991 217.1 L991.5 217.1 L992 217.1 L992.5 218.6 L993 218.6 L993.5 218.6 L994 218.6 L994.5 218.6 L995 218.6 L995.5 218.6 L996 218.6 L996.5 218.6 L997 218.6 L997.5 218.6 L998 218.6 L998.5 216.6 L999 216.6 L999.5 216.6 L1000 216.6 L1000.5 216.6 L1001 216.6 L1001.5 216.6 L1002 216.6 L1002.5 216.6 L1003 216.6 L1003.5 216.6 L1004 218.6 L1004.5 218.6 L1005 218.6 L1005.5 218.6 L1006 218.6 L1006.5 218.6 L1007 218.6 L1007.5 218.6 L1008 218.6 L1008.5 218.6 L1009 218.6 L1009.5 216.2 L1010 216.2 L1010.5 216.2 L1011 216.2 L1011.5 216.2 L1012 216.2 L1012.5 216.2 L1013 216.2 L1013.5 216.2 L1014 216.2 L1014.5 216.2 L1015 218.6 L1015.5 218.6 L1016 218.6 L1016.5 218.6 L1017 218.6 L1017.5 218.6 L1018 218.6 L1018.5 218.6 L1019 218.6 L1019.5 218.6 L1020 218.6 L1020.5 206.6 L1021 206.6 L1021.5 206.6 L1022 206.6 L1022.5 206.6 L1023 206.6 L1023.5 206.6 L1024 206.6 L1024.5 206.6 L1025 206.6 L1025.5 206.6 L1026 218.6 L1026.5 218.6 L1027 218.6 L1027.5 218.6 L1028 218.6 L1028.5 218.6 L1029 218.6 L1029.5 218.6 L1030 218.6 L1030.5 218.6 L1031 218.6 L1031.5 218.6 L1032 214.9 L1032.5 214.9 L1033 214.9 L1033.5 214.9 L1034 214.9 L1034.5 214.9 L1035 214.9 L1035.5 214.9 L1036 214.9 L1036.5 214.9 L1037 214.9 L1037.5 218.6 L1038 218.6 L1038.5 218.6 L1039 218.6 L1039.5 218.6 L1040 218.6 L1040.5 218.6 L1041 218.6 L1041.5 218.6 L1042 218.6 L1042.5 218.6 L1043 214.6 L1043.5 214.6 L1044 214.6 L1044.5 214.6 L1045 214.6 L1045.5 214.6 L1046 214.6 L1046.5 214.6 L1047 214.6 L1047.5 214.6 L1048 214.6 L1048.5 218.6 L1049 218.6 L1049.5 218.6 L1050 218.6 L1050.5 218.6 L1051 218.6 L1051.5 218.6 L1052 218.6 L1052.5 218.6 L1053 218.6 L1053.5 218.6 L1054 214.2 L1054.5 214.2 L1055 214.2 L1055.5 214.2 L1056 214.2 L1056.5 214.2 L1057 214.2 L1057.5 214.2 L1058 214.2 L1058.5 214.2 L1059 214.2 L1059.5 218.6 L1060 218.6 L1060.5 218.6 L1061 218.6 L1061.5 218.6 L1062 218.6 L1062.5 218.6 L1063 218.6 L1063.5 218.6 L1064 218.6 L1064.5 218.6 L1065 217.1 L1065.5 217.1 L1066 217.1 L1066.5 217.1 L1067 217.1 L1067.5 217.1 L1068 217.1 L1068.5 217.1 L1069 217.1 L1069.5 217.1 L1070 217.1 L1070.5 218.6 L1071 218.6 L1071.5 218.6 L1072 218.6 L1072.5 218.6 L1073 218.6 L1073.5 218.6 L1074 218.6 L1074.5 218.6 L1075 218.6 L1075.5 218.6 L1076 218.6 L1076.5 216.6 L1077 216.6 L1077.5 216.6 L1078 216.6 L1078.5 216.6 L1079 216.6 L1079.5 216.6 L1080 216.6 L1080.5 216.6 L1081 216.6 L1081.5 216.6 L1082 218.6 L1082.5 218.6 L1083 218.6 L1083.5 218.6 L1084 218.6 L1084.5 218.6 L1085 218.6 L1085.5 218.6 L1086 218.6 L1086.5 218.6 L1087 218.6 L1087.5 216.2 L1088 216.2 L1088.5 216.2 L1089 216.2 L1089.5 216.2 L1090 216.2 L1090.5 216.2 L1091 216.2 L1091.5 216.2 L1092 216.2 L1092.5 216.2 L1093 218.6 L1093.5 218.6 L1094 218.6 L1094.5 218.6 L1095 218.6 L1095.5 218.6 L1096 218.6 L1096.5 218.6 L1097 218.6 L1097.5 218.6 L1098 218.6 L1098.5 206.6 L1099 206.6 L1099.5 206.6 L1100 206.6 L1100.5 206.6 L1101 206.6 L1101.5 206.6 L1102 206.6 L1102.5 206.6 L1103 206.6 L1103.5 206.6 L1104 218.6 L1104.5 218.6 L1105 218.6 L1105.5 218.6 L1106 218.6 L1106.5 218.6 L1107 218.6 L1107.5 218.6 L1108 218.6 L1108.5 218.6 L1109 218.6 L1109.5 214.9 L1110 214.9 L1110.5 214.9 L1111 214.9 L1111.5 214.9 L1112 214.9 L1112.5 214.9 L1113 214.9 L1113.5 214.9 L1114 214.9 L1114.5 214.9 L1115 218.6 L1115.5 218.6 L1116 218.6 L1116.5 218.6 L1117 218.6 L1117.5 218.6 L1118 218.6 L1118.5 218.6 L1119 218.6 L1119.5 218.6 L1120 218.6 L1120.5 218.6 L1121 214.6 L1121.5 214.6 L1122 214.6 L1122.5 214.6 L1123 214.6 L1123.5 214.6 L1124 214.6 L1124.5 214.6 L1125 214.6 L1125.5 214.6 L1126 214.6 L1126.5 218.6 L1127 218.6 L1127.5 218.6 L1128 218.6 L1128.5 218.6 L1129 218.6 L1129.5 218.6 L1130 218.6 L1130.5 218.6 L1131 218.6 L1131.5 218.6 L1132 214.2 L1132.5 214.2 L1133 214.2 L1133.5 214.2 L1134 214.2 L1134.5 214.2 L1135 214.2 L1135.5 214.2 L1136 214.2 L1136.5 214.2 L1137 214.2 L1137.5 218.6 L1138 218.6 L1138.5 218.6 L1139 218.6 L1139.5 218.6 L1140 218.6 L1140.5 218.6 L1141 218.6 L1141.5 218.6 L1142 218.6 L1142.5 218.6 L1143 217.1 L1143.5 217.1 L1144 217.1 L1144.5 217.1 L1145 217.1 L1145.5 217.1 L1146 217.1 L1146.5 217.1 L1147 217.1 L1147.5 217.1 L1148 217.1 L1148.5 218.6 L1149 218.6 L1149.5 218.6 L1150 218.6 L1150.5 218.6 L1151 218.6 L1151.5 218.6 L1152 218.6 L1152.5 218.6 L1153 218.6 L1153.5 218.6 L1154 216.6 L1154.5 216.6 L1155 216.6 L1155.5 216.6 L1156 216.6 L1156.5 216.6 L1157 216.6 L1157.5 216.6 L1158 216.6 L1158.5 216.6 L1159 216.6 L1159.5 218.6 L1160 218.6 L1160.5 218.6 L1161 218.6 L1161.5 218.6 L1162 218.6 L1162.5 218.6 L1163 218.6 L1163.5 218.6 L1164 218.6 L1164.5 218.6 L1165 218.6 L1165.5 216.2 L1166 216.2 L1166.5 216.2 L1167 216.2 L1167.5 216.2 L1168 216.2 L1168.5 216.2 L1169 216.2 L1169.5 216.2 L1170 216.2 L1170.5 216.2 L1171 218.6 L1171.5 218.6 L1172 218.6 L1172.5 218.6 L1173 218.6 L1173.5 218.6 L1174 218.6 L1174.5 218.6 L1175 218.6 L1175.5 218.6 L1176 218.6 L1176.5 206.6 L1177 206.6 L1177.5 206.6 L1178 206.6 L1178.5 206.6 L1179 206.6 L1179.5 206.6 L1180 206.6 L1180.5 206.6 L1181 206.6 L1181.5 206.6 L1182 218.6 L1182.5 218.6 L1183 218.6 L1183.5 218.6 L1184 218.6 L1184.5 218.6 L1185 218.6 L1185.5 217.1 L1186 217.1 L1186.5 217.1 L1187 217.1 L1187.5 217.1 L1188 217.1 L1188.5 217.1 L1189 217.1 L1189.5 217.1 L1190 217.1 L1190.5 217.1 L1191 217.1 L1191.5 217.1 L1192 217.1 L1192.5 217.1 L1193 217.1 L1193.5 217.1 L1194 217.1 L1194.5 217.1 L1195 217.1 L1195.5 217.1 L1196 217.1 L1196.5 217.1 L1197 217.1 L1197.5 217.1 L1198 217.1 L1198.5 217.1 L1199 217.1 L1199.5 217.1 L1200 217.1 L1200.5 217.1 L1201 217.1 L1201.5 217.1 L1202 217.1 L1202.5 217.1 L1203 217.1 L1203.5 217.1 L1204 217.1 L1204.5 217.1 L1205 217.1 L1205.5 217.1 L1206 217.1 L1206.5 217.1 L1207 217.1 L1207.5 217.1 L1208 218.6 L1208.5 218.6 L1209 218.6 L1209.5 217.1 L1210 217.1 L1210.5 217.1 L1211 217.1 L1211.5 217.1 L1212 217.1 L1212.5 217.1 L1213 217.1 L1213.5 217.1 L1214 217.1 L1214.5 217.1 L1215 218.6 L1215.5 218.6 L1216 218.6 L1216.5 218.6 L1217 218.6 L1217.5 218.6 L1218 218.6 L1218.5 218.6 L1219 218.6 L1219.5 218.6 L1220 218.6 L1220.5 216.6 L1221 216.6 L1221.5 216.6 L1222 216.6 L1222.5 216.6 L1223 216.6 L1223.5 216.6 L1224 216.6 L1224.5 216.6 L1225 216.6 L1225.5 216.6 L1226 218.6 L1226.5 218.6 L1227 218.6 L1227.5 218.6 L1228 218.6 L1228.5 218.6 L1229 218.6 L1229.5 218.6 L1230 218.6 L1230.5 218.6 L1231 218.6 L1231.5 216.2 L1232 216.2 L1232.5 216.2 L1233 216.2 L1233.5 216.2 L1234 216.2 L1234.5 216.2 L1235 216.2 L1235.5 216.2 L1236 216.2 L1236.5 216.2 L1237 218.6 L1237.5 218.6 L1238 218.6 L1238.5 218.6 L1239 218.6 L1239.5 218.6 L1240 218.6 L1240.5 218.6 L1241 218.6 L1241.5 218.6 L1242 218.6 L1242.5 218.6 L1243 206.6 L1243.5 206.6 L1244 206.6 L1244.5 206.6 L1245 206.6 L1245.5 206.6 L1246 206.6 L1246.5 206.6 L1247 206.6 L1247.5 206.6 L1248 206.6 L1248.5 218.6 L1249 218.6 L1249.5 218.6 L1250 218.6 L1250.5 218.6 L1251 218.6 L1251.5 218.6 L1252 218.6 L1252.5 218.6 L1253 218.6 L1253.5 218.6 L1254 214.9 L1254.5 214.9 L1255 214.9 L1255.5 214.9 L1256 214.9 L1256.5 214.9 L1257 214.9 L1257.5 214.9 L1258 214.9 L1258.5 214.9 L1259 214.9 L1259.5 218.6 L1260 218.6 L1260.5 218.6 L1261 218.6 L1261.5 218.6 L1262 218.6 L1262.5 218.6 L1263 218.6 L1263.5 218.6 L1264 218.6 L1264.5 218.6 L1265 214.6 L1265.5 214.6 L1266 214.6 L1266.5 214.6 L1267 214.6 L1267.5 214.6 L1268 214.6 L1268.5 214.6 L1269 214.6 L1269.5 214.6 L1270 214.6 L1270.5 218.6 L1271 218.6 L1271.5 218.6 L1272 218.6 L1272.5 218.6 L1273 218.6 L1273.5 218.6 L1274 218.6 L1274.5 218.6 L1275 218.6 L1275.5 218.6 L1276 214.2 L1276.5 214.2 L1277 214.2 L1277.5 214.2 L1278 214.2 L1278.5 214.2 L1279 214.2 L1279.5 214.2 L1280 214.2 L1280.5 214.2 L1281 214.2 L1281.5 218.6 L1282 218.6 L1282.5 218.6 L1283 218.6 L1283.5 218.6 L1284 218.6 L1284.5 218.6 L1285 218.6 L1285.5 218.6 L1286 218.6 L1286.5 218.6 L1287 218.6 L1287.5 217.1 L1288 217.1 L1288.5 217.1 L1289 217.1 L1289.5 217.1 L1290 217.1 L1290.5 217.1 L1291 217.1 L1291.5 217.1 L1292 217.1 L1292.5 217.1 L1293 218.6 L1293.5 218.6 L1294 218.6 L1294.5 218.6 L1295 218.6 L1295.5 218.6 L1296 218.6 L1296.5 218.6 L1297 218.6 L1297.5 218.6 L1298 218.6 L1298.5 216.6 L1299 216.6 L1299.5 216.6 L1300 216.6 L1300.5 216.6 L1301 216.6 L1301.5 216.6 L1302 216.6 L1302.5 216.6 L1303 216.6 L1303.5 216.6 L1304 218.6 L1304.5 218.6 L1305 218.6 L1305.5 218.6 L1306 218.6 L1306.5 218.6 L1307 218.6 L1307.5 218.6 L1308 218.6 L1308.5 218.6 L1309 218.6 L1309.5 216.2 L1310 216.2 L1310.5 216.2 L1311 216.2 L1311.5 216.2 L1312 216.2 L1312.5 216.2 L1313 216.2 L1313.5 216.2 L1314 216.2 L1314.5 216.2 L1315 218.6 L1315.5 218.6 L1316 218.6 L1316.5 218.6 L1317 218.6 L1317.5 218.6 L1318 218.6 L1318.5 218.6 L1319 218.6 L1319.5 218.6 L1320 218.6 L1320.5 218.6 L1321 206.6 L1321.5 206.6 L1322 206.6 L1322.5 206.6 L1323 206.6 L1323.5 206.6 L1324 206.6 L1324.5 206.6 L1325 206.6 L1325.5 206.6 L1326 206.6 L1326.5 218.6 L1327 218.6 L1327.5 218.6 L1328 218.6 L1328.5 218.6 L1329 218.6 L1329.5 218.6 L1330 218.6 L1330.5 218.6 L1331 218.6 L1331.5 218.6 L1332 214.9 L1332.5 214.9 L1333 214.9 L1333.5 214.9 L1334 214.9 L1334.5 214.9 L1335 214.9 L1335.5 214.9 L1336 214.9 L1336.5 214.9 L1337 214.9 L1337.5 218.6 L1338 218.6 L1338.5 218.6 L1339 218.6 L1339.5 218.6 L1340 218.6 L1340.5 218.6 L1341 218.6 L1341.5 218.6 L1342 218.6 L1342.5 218.6 L1343 214.6" fill="none" stroke="#f2f200" stroke-width="2"/><path d="M28 235.8 L28.5 235.8 L29 235.8 L29.5 235.8 L30 235.8 L30.5 235.8 L31 235.8 L31.5 235.8 L32 235.8 L32.5 235.8 L33 235.8 L33.5 235.8 L34 235.8 L34.5 235.8 L35 235.8 L35.5 235.8 L36 235.8 L36.5 235.8 L37 235.8 L37.5 235.8 L38 235.8 L38.5 235.8 L39 235.8 L39.5 235.8 L40 235.8 L40.5 235.8 L41 235.8 L41.5 235.8 L42 235.8 L42.5 235.8 L43 235.8 L43.5 235.8 L44 235.8 L44.5 235.8 L45 235.8 L45.5 235.8 L46 235.8 L46.5 235.8 L47 235.8 L47.5 235.8 L48 235.8 L48.5 235.8 L49 235.8 L49.5 235.8 L50 235.8 L50.5 235.8 L51 235.8 L51.5 235.8 L52 235.8 L52.5 235.8 L53 235.8 L53.5 235.8 L54 235.8 L54.5 235.8 L55 235.8 L55.5 235.8 L56 235.8 L56.5 235.8 L57 235.8 L57.5 235.8 L58 235.8 L58.5 235.8 L59 235.8 L59.5 235.8 L60 235.8 L60.5 235.8 L61 235.8 L61.5 235.8 L62 235.8 L62.5 235.8 L63 235.8 L63.5 235.8 L64 235.8 L64.5 235.8 L65 235.8 L65.5 235.8 L66 235.8 L66.5 235.8 L67 235.8 L67.5 235.8 L68 235.8 L68.5 235.8 L69 235.8 L69.5 235.8 L70 235.8 L70.5 235.8 L71 235.8 L71.5 235.8 L72 235.8 L72.5 235.8 L73 235.8 L73.5 235.8 L74 235.8 L74.5 229.5 L75 229.5 L75.5 229.5 L76 229.5 L76.5 229.5 L77 229.5 L77.5 229.5 L78 229.5 L78.5 229.5 L79 229.5 L79.5 229.5 L80 229.5 L80.5 229.5 L81 229.5 L81.5 229.5 L82 229.5 L82.5 229.5 L83 229.5 L83.5 229.5 L84 229.5 L84.5 229.5 L85 229.5 L85.5 229.5 L86 229.5 L86.5 229.5 L87 229.5 L87.5 229.5 L88 229.5 L88.5 229.5 L89 229.5 L89.5 229.5 L90 229.5 L90.5 229.5 L91 229.5 L91.5 229.5 L92 229.5 L92.5 229.5 L93 229.5 L93.5 229.5 L94 229.5 L94.5 229.5 L95 229.5 L95.5 229.5 L96 229.5 L96.5 229.5 L97 235.8 L97.5 235.8 L98 235.8 L98.5 235.8 L99 235.8 L99.5 235.8 L100 235.8 L100.5 235.8 L101 235.8 L101.5 235.8 L102 235.8 L102.5 235.8 L103 235.8 L103.5 235.8 L104 235.8 L104.5 235.8 L105 235.8 L105.5 235.8 L106 235.8 L106.5 235.8 L107 235.8 L107.5 235.8 L108 235.8 L108.5 235.8 L109 235.8 L109.5 235.8 L110 235.8 L110.5 235.8 L111 235.8 L111.5 235.8 L112 235.8 L112.5 235.8 L113 235.8 L113.5 235.8 L114 235.8 L114.5 235.8 L115 235.8 L115.5 235.8 L116 235.8 L116.5 235.8 L117 235.8 L117.5 235.8 L118 235.8 L118.5 235.8 L119 235.8 L119.5 235.8 L120 235.8 L120.5 235.8 L121 235.8 L121.5 235.8 L122 235.8 L122.5 235.8 L123 235.8 L123.5 235.8 L124 235.8 L124.5 235.8 L125 235.8 L125.5 235.8 L126 235.8 L126.5 235.8 L127 235.8 L127.5 235.8 L128 235.8 L128.5 235.8 L129 235.8 L129.5 235.8 L130 235.8 L130.5 235.8 L131 235.8 L131.5 235.8 L132 235.8 L132.5 235.8 L133 235.8 L133.5 235.8 L134 235.8 L134.5 235.8 L135 235.8 L135.5 235.8 L136 235.8 L136.5 235.8 L137 235.8 L137.5 235.8 L138 235.8 L138.5 235.8 L139 235.8 L139.5 235.8 L140 235.8 L140.5 235.8 L141 235.8 L141.5 235.8 L142 235.8 L142.5 235.8 L143 235.8 L143.5 235.8 L144 235.8 L144.5 235.8 L145 235.8 L145.5 235.8 L146 235.8 L146.5 235.8 L147 235.8 L147.5 235.8 L148 235.8 L148.5 235.8 L149 235.8 L149.5 235.8 L150 235.8 L150.5 235.8 L151 235.8 L151.5 235.8 L152 235.8 L152.5 235.8 L153 235.8 L153.5 235.8 L154 235.8 L154.5 235.8 L155 235.8 L155.5 235.8 L156 235.8 L156.5 235.8 L157 235.8 L157.5 235.8 L158 235.8 L158.5 235.8 L159 235.8 L159.5 235.8 L160 235.8 L160.5 235.8 L161 235.8 L161.5 235.8 L162 235.8 L162.5 235.8 L163 235.8 L163.5 235.8 L164 235.8 L164.5 235.8 L165 235.8 L165.5 235.8 L166 235.8 L166.5 235.8 L167 235.8 L167.5 235.8 L168 235.8 L168.5 235.8 L169 235.8 L169.5 235.8 L170 235.8 L170.5 235.8 L171 235.8 L171.5 235.8 L172 235.8 L172.5 235.8 L173 235.8 L173.5 235.8 L174 235.8 L174.5 235.8 L175 235.8 L175.5 235.8 L176 235.8 L176.5 235.8 L177 235.8 L177.5 235.8 L178 235.8 L178.5 235.8 L179 235.8 L179.5 235.8 L180 235.8 L180.5 235.8 L181 235.8 L181.5 235.8 L182 235.8 L182.5 235.8 L183 235.8 L183.5 235.8 L184 235.8 L184.5 235.8 L185 235.8 L185.5 235.8 L186 235.8 L186.5 235.8 L187 235.8 L187.5 235.8 L188 235.8 L188.5 235.8 L189 235.8 L189.5 235.8 L190 235.8 L190.5 235.8 L191 235.8 L191.5 235.8 L192 235.8 L192.5 235.8 L193 235.8 L193.5 235.8 L194 235.8 L194.5 235.8 L195 235.8 L195.5 235.8 L196 235.8 L196.5 235.8 L197 235.8 L197.5 235.8 L198 235.8 L198.5 235.8 L199 235.8 L199.5 235.8 L200 235.8 L200.5 235.8 L201 235.8 L201.5 235.8 L202 235.8 L202.5 235.8 L203 235.8 L203.5 235.8 L204 235.8 L204.5 235.8 L205 235.8 L205.5 235.8 L206 235.8 L206.5 235.8 L207 235.8 L207.5 235.8 L208 235.8 L208.5 235.8 L209 235.8 L209.5 235.8 L210 235.8 L210.5 235.8 L211 235.8 L211.5 235.8 L212 235.8 L212.5 235.8 L213 235.8 L213.5 235.8 L214 235.8 L214.5 235.8 L215 235.8 L215.5 235.8 L216 235.8 L216.5 235.8 L217 235.8 L217.5 235.8 L218 235.8 L218.5 235.8 L219 235.8 L219.5 235.8 L220 235.8 L220.5 235.8 L221 235.8 L221.5 235.8 L222 235.8 L222.5 235.8 L223 235.8 L223.5 235.8 L224 235.8 L224.5 235.8 L225 235.8 L225.5 235.8 L226 235.8 L226.5 235.8 L227 235.8 L227.5 235.8 L228 235.8 L228.5 235.8 L229 235.8 L229.5 235.8 L230 235.8 L230.5 235.8 L231 235.8 L231.5 235.8 L232 235.8 L232.5 235.8 L233 235.8 L233.5 235.8 L234 235.8 L234.5 235.8 L235 235.8 L235.5 235.8 L236 235.8 L236.5 235.8 L237 235.8 L237.5 235.8 L238 235.8 L238.5 235.8 L239 235.8 L239.5 235.8 L240 235.8 L240.5 235.8 L241 235.8 L241.5 235.8 L242 235.8 L242.5 235.8 L243 235.8 L243.5 235.8 L244 235.8 L244.5 235.8 L245 235.8 L245.5 235.8 L246 235.8 L246.5 235.8 L247 235.8 L247.5 235.8 L248 235.8 L248.5 235.8 L249 235.8 L249.5 235.8 L250 235.8 L250.5 235.8 L251 235.8 L251.5 235.8 L252 235.8 L252.5 235.8 L253 235.8 L253.5 235.8 L254 235.8 L254.5 235.8 L255 235.8 L255.5 235.8 L256 235.8 L256.5 235.8 L257 235.8 L257.5 235.8 L258 235.8 L258.5 235.8 L259 235.8 L259.5 235.8 L260 235.8 L260.5 235.8 L261 235.8 L261.5 235.8 L262 235.8 L262.5 235.8 L263 235.8 L263.5 235.8 L264 235.8 L264.5 235.8 L265 235.8 L265.5 235.8 L266 235.8 L266.5 235.8 L267 235.8 L267.5 235.8 L268 235.8 L268.5 235.8 L269 235.8 L269.5 235.8 L270 235.8 L270.5 235.8 L271 235.8 L271.5 235.8 L272 235.8 L272.5 235.8 L273 235.8 L273.5 235.8 L274 235.8 L274.5 235.8 L275 235.8 L275.5 235.8 L276 235.8 L276.5 235.8 L277 235.8 L277.5 235.8 L278 235.8 L278.5 235.8 L279 235.8 L279.5 235.8 L280 235.8 L280.5 235.8 L281 235.8 L281.5 235.8 L282 235.8 L282.5 235.8 L283 235.8 L283.5 235.8 L284 235.8 L284.5 235.8 L285 235.8 L285.5 235.8 L286 235.8 L286.5 235.8 L287 235.8 L287.5 235.8 L288 235.8 L288.5 235.8 L289 235.8 L289.5 235.8 L290 235.8 L290.5 235.8 L291 235.8 L291.5 235.8 L292 235.8 L292.5 235.8 L293 235.8 L293.5 235.8 L294 235.8 L294.5 235.8 L295 235.8 L295.5 235.8 L296 235.8 L296.5 235.8 L297 229.5 L297.5 229.5 L298 229.5 L298.5 229.5 L299 229.5 L299.5 229.5 L300 229.5 L300.5 229.5 L301 229.5 L301.5 229.5 L302 229.5 L302.5 229.5 L303 229.5 L303.5 229.5 L304 229.5 L304.5 229.5 L305 229.5 L305.5 229.5 L306 229.5 L306.5 229.5 L307 229.5 L307.5 229.5 L308 229.5 L308.5 229.5 L309 229.5 L309.5 229.5 L310 229.5 L310.5 229.5 L311 229.5 L311.5 229.5 L312 229.5 L312.5 229.5 L313 229.5 L313.5 229.5 L314 229.5 L314.5 229.5 L315 229.5 L315.5 229.5 L316 229.5 L316.5 229.5 L317 229.5 L317.5 229.5 L318 229.5 L318.5 229.5 L319 235.8 L319.5 235.8 L320 235.8 L320.5 235.8 L321 235.8 L321.5 235.8 L322 235.8 L322.5 235.8 L323 235.8 L323.5 235.8 L324 235.8 L324.5 235.8 L325 235.8 L325.5 235.8 L326 235.8 L326.5 235.8 L327 235.8 L327.5 235.8 L328 235.8 L328.5 235.8 L329 235.8 L329.5 235.8 L330 235.8 L330.5 235.8 L331 235.8 L331.5 235.8 L332 235.8 L332.5 235.8 L333 235.8 L333.5 235.8 L334 235.8 L334.5 235.8 L335 235.8 L335.5 235.8 L336 235.8 L336.5 235.8 L337 235.8 L337.5 235.8 L338 235.8 L338.5 235.8 L339 235.8 L339.5 235.8 L340 235.8 L340.5 235.8 L341 235.8 L341.5 235.8 L342 235.8 L342.5 235.8 L343 235.8 L343.5 235.8 L344 235.8 L344.5 235.8 L345 235.8 L345.5 235.8 L346 235.8 L346.5 235.8 L347 235.8 L347.5 235.8 L348 235.8 L348.5 235.8 L349 235.8 L349.5 235.8 L350 235.8 L350.5 235.8 L351 235.8 L351.5 235.8 L352 235.8 L352.5 235.8 L353 235.8 L353.5 235.8 L354 235.8 L354.5 235.8 L355 235.8 L355.5 235.8 L356 235.8 L356.5 235.8 L357 235.8 L357.5 235.8 L358 235.8 L358.5 235.8 L359 235.8 L359.5 235.8 L360 235.8 L360.5 235.8 L361 235.8 L361.5 235.8 L362 235.8 L362.5 235.8 L363 235.8 L363.5 235.8 L364 235.8 L364.5 235.8 L365 235.8 L365.5 235.8 L366 235.8 L366.5 235.8 L367 235.8 L367.5 235.8 L368 235.8 L368.5 235.8 L369 235.8 L369.5 235.8 L370 235.8 L370.5 235.8 L371 235.8 L371.5 235.8 L372 235.8 L372.5 235.8 L373 235.8 L373.5 235.8 L374 235.8 L374.5 235.8 L375 235.8 L375.5 235.8 L376 235.8 L376.5 235.8 L377 235.8 L377.5 235.8 L378 235.8 L378.5 235.8 L379 235.8 L379.5 235.8 L380 235.8 L380.5 235.8 L381 235.8 L381.5 235.8 L382 235.8 L382.5 235.8 L383 235.8 L383.5 235.8 L384 235.8 L384.5 235.8 L385 235.8 L385.5 235.8 L386 235.8 L386.5 235.8 L387 235.8 L387.5 235.8 L388 235.8 L388.5 235.8 L389 235.8 L389.5 235.8 L390 235.8 L390.5 235.8 L391 235.8 L391.5 235.8 L392 235.8 L392.5 235.8 L393 235.8 L393.5 235.8 L394 235.8 L394.5 235.8 L395 235.8 L395.5 235.8 L396 235.8 L396.5 235.8 L397 235.8 L397.5 235.8 L398 235.8 L398.5 235.8 L399 235.8 L399.5 235.8 L400 235.8 L400.5 235.8 L401 235.8 L401.5 235.8 L402 235.8 L402.5 235.8 L403 235.8 L403.5 235.8 L404 235.8 L404.5 235.8 L405 235.8 L405.5 235.8 L406 235.8 L406.5 235.8 L407 235.8 L407.5 235.8 L408 235.8 L408.5 235.8 L409 235.8 L409.5 235.8 L410 235.8 L410.5 235.8 L411 235.8 L411.5 235.8 L412 235.8 L412.5 235.8 L413 235.8 L413.5 235.8 L414 235.8 L414.5 235.8 L415 235.8 L415.5 235.8 L416 235.8 L416.5 235.8 L417 235.8 L417.5 235.8 L418 235.8 L418.5 235.8 L419 235.8 L419.5 235.8 L420 235.8 L420.5 235.8 L421 235.8 L421.5 235.8 L422 235.8 L422.5 235.8 L423 235.8 L423.5 235.8 L424 235.8 L424.5 235.8 L425 235.8 L425.5 235.8 L426 235.8 L426.5 235.8 L427 235.8 L427.5 235.8 L428 235.8 L428.5 235.8 L429 235.8 L429.5 235.8 L430 235.8 L430.5 235.8 L431 235.8 L431.5 235.8 L432 235.8 L432.5 235.8 L433 235.8 L433.5 235.8 L434 235.8 L434.5 235.8 L435 235.8 L435.5 235.8 L436 235.8 L436.5 235.8 L437 235.8 L437.5 235.8 L438 235.8 L438.5 235.8 L439 235.8 L439.5 235.8 L440 235.8 L440.5 235.8 L441 235.8 L441.5 235.8 L442 235.8 L442.5 235.8 L443 235.8 L443.5 235.8 L444 235.8 L444.5 235.8 L445 235.8 L445.5 235.8 L446 235.8 L446.5 235.8 L447 235.8 L447.5 235.8 L448 235.8 L448.5 235.8 L449 235.8 L449.5 235.8 L450 235.8 L450.5 235.8 L451 235.8 L451.5 235.8 L452 235.8 L452.5 235.8 L453 235.8 L453.5 235.8 L454 235.8 L454.5 235.8 L455 235.8 L455.5 235.8 L456 235.8 L456.5 235.8 L457 235.8 L457.5 235.8 L458 235.8 L458.5 235.8 L459 235.8 L459.5 235.8 L460 235.8 L460.5 235.8 L461 235.8 L461.5 235.8 L462 235.8 L462.5 235.8 L463 235.8 L463.5 235.8 L464 235.8 L464.5 235.8 L465 235.8 L465.5 235.8 L466 235.8 L466.5 235.8 L467 235.8 L467.5 235.8 L468 235.8 L468.5 235.8 L469 235.8 L469.5 235.8 L470 235.8 L470.5 235.8 L471 235.8 L471.5 235.8 L472 235.8 L472.5 235.8 L473 235.8 L473.5 235.8 L474 235.8 L474.5 235.8 L475 235.8 L475.5 235.8 L476 235.8 L476.5 235.8 L477 235.8 L477.5 235.8 L478 235.8 L478.5 235.8 L479 235.8 L479.5 235.8 L480 235.8 L480.5 235.8 L481 235.8 L481.5 235.8 L482 235.8 L482.5 235.8 L483 235.8 L483.5 235.8 L484 235.8 L484.5 235.8 L485 235.8 L485.5 235.8 L486 235.8 L486.5 235.8 L487 235.8 L487.5 235.8 L488 235.8 L488.5 235.8 L489 235.8 L489.5 235.8 L490 235.8 L490.5 235.8 L491 235.8 L491.5 235.8 L492 235.8 L492.5 235.8 L493 235.8 L493.5 235.8 L494 235.8 L494.5 235.8 L495 235.8 L495.5 235.8 L496 235.8 L496.5 235.8 L497 235.8 L497.5 235.8 L498 235.8 L498.5 235.8 L499 235.8 L499.5 235.8 L500 235.8 L500.5 235.8 L501 235.8 L501.5 235.8 L502 235.8 L502.5 235.8 L503 235.8 L503.5 235.8 L504 235.8 L504.5 235.8 L505 235.8 L505.5 235.8 L506 235.8 L506.5 235.8 L507 235.8 L507.5 235.8 L508 235.8 L508.5 235.8 L509 235.8 L509.5 235.8 L510 235.8 L510.5 235.8 L511 235.8 L511.5 235.8 L512 235.8 L512.5 235.8 L513 235.8 L513.5 235.8 L514 235.8 L514.5 235.8 L515 235.8 L515.5 235.8 L516 235.8 L516.5 235.8 L517 235.8 L517.5 235.8 L518 235.8 L518.5 235.8 L519 229.5 L519.5 229.5 L520 229.5 L520.5 229.5 L521 229.5 L521.5 229.5 L522 229.5 L522.5 229.5 L523 229.5 L523.5 229.5 L524 229.5 L524.5 229.5 L525 229.5 L525.5 229.5 L526 229.5 L526.5 229.5 L527 229.5 L527.5 229.5 L528 229.5 L528.5 229.5 L529 229.5 L529.5 229.5 L530 229.5 L530.5 229.5 L531 229.5 L531.5 229.5 L532 229.5 L532.5 229.5 L533 229.5 L533.5 229.5 L534 229.5 L534.5 229.5 L535 229.5 L535.5 229.5 L536 229.5 L536.5 229.5 L537 229.5 L537.5 229.5 L538 229.5 L538.5 229.5 L539 229.5 L539.5 229.5 L540 229.5 L540.5 229.5 L541 229.5 L541.5 235.8 L542 235.8 L542.5 235.8 L543 235.8 L543.5 235.8 L544 235.8 L544.5 235.8 L545 235.8 L545.5 235.8 L546 235.8 L546.5 235.8 L547 235.8 L547.5 235.8 L548 235.8 L548.5 235.8 L549 235.8 L549.5 235.8 L550 235.8 L550.5 235.8 L551 235.8 L551.5 235.8 L552 235.8 L552.5 235.8 L553 235.8 L553.5 235.8 L554 235.8 L554.5 235.8 L555 235.8 L555.5 235.8 L556 235.8 L556.5 235.8 L557 235.8 L557.5 235.8 L558 235.8 L558.5 235.8 L559 235.8 L559.5 235.8 L560 235.8 L560.5 235.8 L561 235.8 L561.5 235.8 L562 235.8 L562.5 235.8 L563 235.8 L563.5 235.8 L564 235.8 L564.5 235.8 L565 235.8 L565.5 235.8 L566 235.8 L566.5 235.8 L567 235.8 L567.5 235.8 L568 235.8 L568.5 235.8 L569 235.8 L569.5 235.8 L570 235.8 L570.5 235.8 L571 235.8 L571.5 235.8 L572 235.8 L572.5 235.8 L573 235.8 L573.5 235.8 L574 235.8 L574.5 235.8 L575 235.8 L575.5 235.8 L576 235.8 L576.5 235.8 L577 235.8 L577.5 235.8 L578 235.8 L578.5 235.8 L579 235.8 L579.5 235.8 L580 235.8 L580.5 235.8 L581 235.8 L581.5 235.8 L582 235.8 L582.5 235.8 L583 235.8 L583.5 235.8 L584 235.8 L584.5 235.8 L585 235.8 L585.5 235.8 L586 235.8 L586.5 235.8 L587 235.8 L587.5 235.8 L588 235.8 L588.5 235.8 L589 235.8 L589.5 235.8 L590 235.8 L590.5 235.8 L591 235.8 L591.5 235.8 L592 235.8 L592.5 235.8 L593 235.8 L593.5 235.8 L594 235.8 L594.5 235.8 L595 235.8 L595.5 235.8 L596 235.8 L596.5 235.8 L597 235.8 L597.5 235.8 L598 235.8 L598.5 235.8 L599 235.8 L599.5 235.8 L600 235.8 L600.5 235.8 L601 235.8 L601.5 235.8 L602 235.8 L602.5 235.8 L603 235.8 L603.5 235.8 L604 235.8 L604.5 235.8 L605 235.8 L605.5 235.8 L606 235.8 L606.5 235.8 L607 235.8 L607.5 235.8 L608 235.8 L608.5 235.8 L609 235.8 L609.5 235.8 L610 235.8 L610.5 235.8 L611 235.8 L611.5 235.8 L612 235.8 L612.5 235.8 L613 235.8 L613.5 235.8 L614 235.8 L614.5 235.8 L615 235.8 L615.5 235.8 L616 235.8 L616.5 235.8 L617 235.8 L617.5 235.8 L618 235.8 L618.5 235.8 L619 235.8 L619.5 235.8 L620 235.8 L620.5 235.8 L621 235.8 L621.5 235.8 L622 235.8 L622.5 235.8 L623 235.8 L623.5 235.8 L624 235.8 L624.5 235.8 L625 235.8 L625.5 235.8 L626 235.8 L626.5 235.8 L627 235.8 L627.5 235.8 L628 235.8 L628.5 235.8 L629 235.8 L629.5 235.8 L630 235.8 L630.5 235.8 L631 235.8 L631.5 235.8 L632 235.8 L632.5 235.8 L633 235.8 L633.5 235.8 L634 235.8 L634.5 235.8 L635 235.8 L635.5 235.8 L636 235.8 L636.5 235.8 L637 235.8 L637.5 235.8 L638 235.8 L638.5 235.8 L639 235.8 L639.5 235.8 L640 235.8 L640.5 235.8 L641 235.8 L641.5 235.8 L642 235.8 L642.5 235.8 L643 235.8 L643.5 235.8 L644 235.8 L644.5 235.8 L645 235.8 L645.5 235.8 L646 235.8 L646.5 235.8 L647 235.8 L647.5 235.8 L648 235.8 L648.5 235.8 L649 235.8 L649.5 235.8 L650 235.8 L650.5 235.8 L651 235.8 L651.5 235.8 L652 235.8 L652.5 235.8 L653 235.8 L653.5 235.8 L654 235.8 L654.5 235.8 L655 235.8 L655.5 235.8 L656 235.8 L656.5 235.8 L657 235.8 L657.5 235.8 L658 235.8 L658.5 235.8 L659 235.8 L659.5 235.8 L660 235.8 L660.5 235.8 L661 235.8 L661.5 235.8 L662 235.8 L662.5 235.8 L663 235.8 L663.5 235.8 L664 235.8 L664.5 235.8 L665 235.8 L665.5 235.8 L666 235.8 L666.5 235.8 L667 235.8 L667.5 235.8 L668 235.8 L668.5 235.8 L669 235.8 L669.5 235.8 L670 235.8 L670.5 235.8 L671 235.8 L671.5 235.8 L672 235.8 L672.5 235.8 L673 235.8 L673.5 235.8 L674 235.8 L674.5 235.8 L675 235.8 L675.5 235.8 L676 235.8 L676.5 235.8 L677 235.8 L677.5 235.8 L678 235.8 L678.5 235.8 L679 235.8 L679.5 235.8 L680 235.8 L680.5 235.8 L681 235.8 L681.5 235.8 L682 235.8 L682.5 235.8 L683 235.8 L683.5 235.8 L684 235.8 L684.5 235.8 L685 235.8 L685.5 235.8 L686 235.8 L686.5 235.8 L687 235.8 L687.5 235.8 L688 235.8 L688.5 235.8 L689 235.8 L689.5 235.8 L690 235.8 L690.5 235.8 L691 235.8 L691.5 235.8 L692 235.8 L692.5 235.8 L693 235.8 L693.5 235.8 L694 235.8 L694.5 235.8 L695 235.8 L695.5 235.8 L696 235.8 L696.5 235.8 L697 235.8 L697.5 235.8 L698 235.8 L698.5 235.8 L699 235.8 L699.5 235.8 L700 235.8 L700.5 235.8 L701 235.8 L701.5 235.8 L702 235.8 L702.5 235.8 L703 235.8 L703.5 235.8 L704 235.8 L704.5 235.8 L705 235.8 L705.5 235.8 L706 235.8 L706.5 235.8 L707 235.8 L707.5 235.8 L708 235.8 L708.5 235.8 L709 235.8 L709.5 235.8 L710 235.8 L710.5 235.8 L711 235.8 L711.5 235.8 L712 235.8 L712.5 235.8 L713 235.8 L713.5 235.8 L714 235.8 L714.5 235.8 L715 235.8 L715.5 235.8 L716 235.8 L716.5 235.8 L717 235.8 L717.5 235.8 L718 235.8 L718.5 235.8 L719 235.8 L719.5 235.8 L720 235.8 L720.5 235.8 L721 235.8 L721.5 235.8 L722 235.8 L722.5 235.8 L723 235.8 L723.5 235.8 L724 235.8 L724.5 235.8 L725 235.8 L725.5 235.8 L726 235.8 L726.5 235.8 L727 235.8 L727.5 235.8 L728 235.8 L728.5 235.8 L729 235.8 L729.5 235.8 L730 235.8 L730.5 235.8 L731 235.8 L731.5 235.8 L732 235.8 L732.5 235.8 L733 235.8 L733.5 235.8 L734 235.8 L734.5 235.8 L735 235.8 L735.5 235.8 L736 235.8 L736.5 235.8 L737 235.8 L737.5 235.8 L738 235.8 L738.5 235.8 L739 235.8 L739.5 235.8 L740 235.8 L740.5 235.8 L741 229.5 L741.5 229.5 L742 229.5 L742.5 229.5 L743 229.5 L743.5 229.5 L744 229.5 L744.5 229.5 L745 229.5 L745.5 229.5 L746 229.5 L746.5 229.5 L747 229.5 L747.5 229.5 L748 229.5 L748.5 229.5 L749 229.5 L749.5 229.5 L750 229.5 L750.5 229.5 L751 229.5 L751.5 229.5 L752 229.5 L752.5 229.5 L753 229.5 L753.5 229.5 L754 229.5 L754.5 229.5 L755 229.5 L755.5 229.5 L756 229.5 L756.5 229.5 L757 229.5 L757.5 229.5 L758 229.5 L758.5 229.5 L759 229.5 L759.5 229.5 L760 229.5 L760.5 229.5 L761 229.5 L761.5 229.5 L762 229.5 L762.5 229.5 L763 229.5 L763.5 235.8 L764 235.8 L764.5 235.8 L765 235.8 L765.5 235.8 L766 235.8 L766.5 235.8 L767 235.8 L767.5 235.8 L768 235.8 L768.5 235.8 L769 235.8 L769.5 235.8 L770 235.8 L770.5 235.8 L771 235.8 L771.5 235.8 L772 235.8 L772.5 235.8 L773 235.8 L773.5 235.8 L774 235.8 L774.5 235.8 L775 235.8 L775.5 235.8 L776 235.8 L776.5 235.8 L777 235.8 L777.5 235.8 L778 235.8 L778.5 235.8 L779 235.8 L779.5 235.8 L780 235.8 L780.5 235.8 L781 235.8 L781.5 235.8 L782 235.8 L782.5 235.8 L783 235.8 L783.5 235.8 L784 235.8 L784.5 235.8 L785 235.8 L785.5 235.8 L786 235.8 L786.5 235.8 L787 235.8 L787.5 235.8 L788 235.8 L788.5 235.8 L789 235.8 L789.5 235.8 L790 235.8 L790.5 235.8 L791 235.8 L791.5 235.8 L792 235.8 L792.5 235.8 L793 235.8 L793.5 235.8 L794 235.8 L794.5 235.8 L795 235.8 L795.5 235.8 L796 235.8 L796.5 235.8 L797 235.8 L797.5 235.8 L798 235.8 L798.5 235.8 L799 235.8 L799.5 235.8 L800 235.8 L800.5 235.8 L801 235.8 L801.5 235.8 L802 235.8 L802.5 235.8 L803 235.8 L803.5 235.8 L804 235.8 L804.5 235.8 L805 235.8 L805.5 235.8 L806 235.8 L806.5 235.8 L807 235.8 L807.5 235.8 L808 235.8 L808.5 235.8 L809 235.8 L809.5 235.8 L810 235.8 L810.5 235.8 L811 235.8 L811.5 235.8 L812 235.8 L812.5 235.8 L813 235.8 L813.5 235.8 L814 235.8 L814.5 235.8 L815 235.8 L815.5 235.8 L816 235.8 L816.5 235.8 L817 235.8 L817.5 235.8 L818 235.8 L818.5 235.8 L819 235.8 L819.5 235.8 L820 235.8 L820.5 235.8 L821 235.8 L821.5 235.8 L822 235.8 L822.5 235.8 L823 235.8 L823.5 235.8 L824 235.8 L824.5 235.8 L825 235.8 L825.5 235.8 L826 235.8 L826.5 235.8 L827 235.8 L827.5 235.8 L828 235.8 L828.5 235.8 L829 235.8 L829.5 235.8 L830 235.8 L830.5 235.8 L831 235.8 L831.5 235.8 L832 235.8 L832.5 235.8 L833 235.8 L833.5 235.8 L834 235.8 L834.5 235.8 L835 235.8 L835.5 235.8 L836 235.8 L836.5 235.8 L837 235.8 L837.5 235.8 L838 235.8 L838.5 235.8 L839 235.8 L839.5 235.8 L840 235.8 L840.5 235.8 L841 235.8 L841.5 235.8 L842 235.8 L842.5 235.8 L843 235.8 L843.5 235.8 L844 235.8 L844.5 235.8 L845 235.8 L845.5 235.8 L846 235.8 L846.5 235.8 L847 235.8 L847.5 235.8 L848 235.8 L848.5 235.8 L849 235.8 L849.5 235.8 L850 235.8 L850.5 235.8 L851 235.8 L851.5 235.8 L852 235.8 L852.5 235.8 L853 235.8 L853.5 235.8 L854 235.8 L854.5 235.8 L855 235.8 L855.5 235.8 L856 235.8 L856.5 235.8 L857 235.8 L857.5 235.8 L858 235.8 L858.5 235.8 L859 235.8 L859.5 235.8 L860 235.8 L860.5 235.8 L861 235.8 L861.5 235.8 L862 235.8 L862.5 235.8 L863 235.8 L863.5 235.8 L864 235.8 L864.5 235.8 L865 235.8 L865.5 235.8 L866 235.8 L866.5 235.8 L867 235.8 L867.5 235.8 L868 235.8 L868.5 235.8 L869 235.8 L869.5 235.8 L870 235.8 L870.5 235.8 L871 235.8 L871.5 235.8 L872 235.8 L872.5 235.8 L873 235.8 L873.5 235.8 L874 235.8 L874.5 235.8 L875 235.8 L875.5 235.8 L876 235.8 L876.5 235.8 L877 235.8 L877.5 235.8 L878 235.8 L878.5 235.8 L879 235.8 L879.5 235.8 L880 235.8 L880.5 235.8 L881 235.8 L881.5 235.8 L882 235.8 L882.5 235.8 L883 235.8 L883.5 235.8 L884 235.8 L884.5 235.8 L885 235.8 L885.5 235.8 L886 235.8 L886.5 235.8 L887 235.8 L887.5 235.8 L888 235.8 L888.5 235.8 L889 235.8 L889.5 235.8 L890 235.8 L890.5 235.8 L891 235.8 L891.5 235.8 L892 235.8 L892.5 235.8 L893 235.8 L893.5 235.8 L894 235.8 L894.5 235.8 L895 235.8 L895.5 235.8 L896 235.8 L896.5 235.8 L897 235.8 L897.5 235.8 L898 235.8 L898.5 235.8 L899 235.8 L899.5 235.8 L900 235.8 L900.5 235.8 L901 235.8 L901.5 235.8 L902 235.8 L902.5 235.8 L903 235.8 L903.5 235.8 L904 235.8 L904.5 235.8 L905 235.8 L905.5 235.8 L906 235.8 L906.5 235.8 L907 235.8 L907.5 235.8 L908 235.8 L908.5 235.8 L909 235.8 L909.5 235.8 L910 235.8 L910.5 235.8 L911 235.8 L911.5 235.8 L912 235.8 L912.5 235.8 L913 235.8 L913.5 235.8 L914 235.8 L914.5 235.8 L915 235.8 L915.5 235.8 L916 235.8 L916.5 235.8 L917 235.8 L917.5 235.8 L918 235.8 L918.5 235.8 L919 235.8 L919.5 235.8 L920 235.8 L920.5 235.8 L921 235.8 L921.5 235.8 L922 235.8 L922.5 235.8 L923 235.8 L923.5 235.8 L924 235.8 L924.5 235.8 L925 235.8 L925.5 235.8 L926 235.8 L926.5 235.8 L927 235.8 L927.5 235.8 L928 235.8 L928.5 235.8 L929 235.8 L929.5 235.8 L930 235.8 L930.5 235.8 L931 235.8 L931.5 235.8 L932 235.8 L932.5 235.8 L933 235.8 L933.5 235.8 L934 235.8 L934.5 235.8 L935 235.8 L935.5 235.8 L936 235.8 L936.5 235.8 L937 235.8 L937.5 235.8 L938 235.8 L938.5 235.8 L939 235.8 L939.5 235.8 L940 235.8 L940.5 235.8 L941 235.8 L941.5 235.8 L942 235.8 L942.5 235.8 L943 235.8 L943.5 235.8 L944 235.8 L944.5 235.8 L945 235.8 L945.5 235.8 L946 235.8 L946.5 235.8 L947 235.8 L947.5 235.8 L948 235.8 L948.5 235.8 L949 235.8 L949.5 235.8 L950 235.8 L950.5 235.8 L951 235.8 L951.5 235.8 L952 235.8 L952.5 235.8 L953 235.8 L953.5 235.8 L954 235.8 L954.5 235.8 L955 235.8 L955.5 235.8 L956 235.8 L956.5 235.8 L957 235.8 L957.5 235.8 L958 235.8 L958.5 235.8 L959 235.8 L959.5 235.8 L960 235.8 L960.5 235.8 L961 235.8 L961.5 235.8 L962 235.8 L962.5 235.8 L963 235.8 L963.5 229.5 L964 229.5 L964.5 229.5 L965 229.5 L965.5 229.5 L966 229.5 L966.5 229.5 L967 229.5 L967.5 229.5 L968 229.5 L968.5 229.5 L969 229.5 L969.5 229.5 L970 229.5 L970.5 229.5 L971 229.5 L971.5 229.5 L972 229.5 L972.5 229.5 L973 229.5 L973.5 229.5 L974 229.5 L974.5 229.5 L975 229.5 L975.5 229.5 L976 229.5 L976.5 229.5 L977 229.5 L977.5 229.5 L978 229.5 L978.5 229.5 L979 229.5 L979.5 229.5 L980 229.5 L980.5 229.5 L981 229.5 L981.5 229.5 L982 229.5 L982.5 229.5 L983 229.5 L983.5 229.5 L984 229.5 L984.5 229.5 L985 229.5 L985.5 235.8 L986 235.8 L986.5 235.8 L987 235.8 L987.5 235.8 L988 235.8 L988.5 235.8 L989 235.8 L989.5 235.8 L990 235.8 L990.5 235.8 L991 235.8 L991.5 235.8 L992 235.8 L992.5 235.8 L993 235.8 L993.5 235.8 L994 235.8 L994.5 235.8 L995 235.8 L995.5 235.8 L996 235.8 L996.5 235.8 L997 235.8 L997.5 235.8 L998 235.8 L998.5 235.8 L999 235.8 L999.5 235.8 L1000 235.8 L1000.5 235.8 L1001 235.8 L1001.5 235.8 L1002 235.8 L1002.5 235.8 L1003 235.8 L1003.5 235.8 L1004 235.8 L1004.5 235.8 L1005 235.8 L1005.5 235.8 L1006 235.8 L1006.5 235.8 L1007 235.8 L1007.5 235.8 L1008 235.8 L1008.5 235.8 L1009 235.8 L1009.5 235.8 L1010 235.8 L1010.5 235.8 L1011 235.8 L1011.5 235.8 L1012 235.8 L1012.5 235.8 L1013 235.8 L1013.5 235.8 L1014 235.8 L1014.5 235.8 L1015 235.8 L1015.5 235.8 L1016 235.8 L1016.5 235.8 L1017 235.8 L1017.5 235.8 L1018 235.8 L1018.5 235.8 L1019 235.8 L1019.5 235.8 L1020 235.8 L1020.5 235.8 L1021 235.8 L1021.5 235.8 L1022 235.8 L1022.5 235.8 L1023 235.8 L1023.5 235.8 L1024 235.8 L1024.5 235.8 L1025 235.8 L1025.5 235.8 L1026 235.8 L1026.5 235.8 L1027 235.8 L1027.5 235.8 L1028 235.8 L1028.5 235.8 L1029 235.8 L1029.5 235.8 L1030 235.8 L1030.5 235.8 L1031 235.8 L1031.5 235.8 L1032 235.8 L1032.5 235.8 L1033 235.8 L1033.5 235.8 L1034 235.8 L1034.5 235.8 L1035 235.8 L1035.5 235.8 L1036 235.8 L1036.5 235.8 L1037 235.8 L1037.5 235.8 L1038 235.8 L1038.5 235.8 L1039 235.8 L1039.5 235.8 L1040 235.8 L1040.5 235.8 L1041 235.8 L1041.5 235.8 L1042 235.8 L1042.5 235.8 L1043 235.8 L1043.5 235.8 L1044 235.8 L1044.5 235.8 L1045 235.8 L1045.5 235.8 L1046 235.8 L1046.5 235.8 L1047 235.8 L1047.5 235.8 L1048 235.8 L1048.5 235.8 L1049 235.8 L1049.5 235.8 L1050 235.8 L1050.5 235.8 L1051 235.8 L1051.5 235.8 L1052 235.8 L1052.5 235.8 L1053 235.8 L1053.5 235.8 L1054 235.8 L1054.5 235.8 L1055 235.8 L1055.5 235.8 L1056 235.8 L1056.5 235.8 L1057 235.8 L1057.5 235.8 L1058 235.8 L1058.5 235.8 L1059 235.8 L1059.5 235.8 L1060 235.8 L1060.5 235.8 L1061 235.8 L1061.5 235.8 L1062 235.8 L1062.5 235.8 L1063 235.8 L1063.5 235.8 L1064 235.8 L1064.5 235.8 L1065 235.8 L1065.5 235.8 L1066 235.8 L1066.5 235.8 L1067 235.8 L1067.5 235.8 L1068 235.8 L1068.5 235.8 L1069 235.8 L1069.5 235.8 L1070 235.8 L1070.5 235.8 L1071 235.8 L1071.5 235.8 L1072 235.8 L1072.5 235.8 L1073 235.8 L1073.5 235.8 L1074 235.8 L1074.5 235.8 L1075 235.8 L1075.5 235.8 L1076 235.8 L1076.5 235.8 L1077 235.8 L1077.5 235.8 L1078 235.8 L1078.5 235.8 L1079 235.8 L1079.5 235.8 L1080 235.8 L1080.5 235.8 L1081 235.8 L1081.5 235.8 L1082 235.8 L1082.5 235.8 L1083 235.8 L1083.5 235.8 L1084 235.8 L1084.5 235.8 L1085 235.8 L1085.5 235.8 L1086 235.8 L1086.5 235.8 L1087 235.8 L1087.5 235.8 L1088 235.8 L1088.5 235.8 L1089 235.8 L1089.5 235.8 L1090 235.8 L1090.5 235.8 L1091 235.8 L1091.5 235.8 L1092 235.8 L1092.5 235.8 L1093 235.8 L1093.5 235.8 L1094 235.8 L1094.5 235.8 L1095 235.8 L1095.5 235.8 L1096 235.8 L1096.5 235.8 L1097 235.8 L1097.5 235.8 L1098 235.8 L1098.5 235.8 L1099 235.8 L1099.5 235.8 L1100 235.8 L1100.5 235.8 L1101 235.8 L1101.5 235.8 L1102 235.8 L1102.5 235.8 L1103 235.8 L1103.5 235.8 L1104 235.8 L1104.5 235.8 L1105 235.8 L1105.5 235.8 L1106 235.8 L1106.5 235.8 L1107 235.8 L1107.5 235.8 L1108 235.8 L1108.5 235.8 L1109 235.8 L1109.5 235.8 L1110 235.8 L1110.5 235.8 L1111 235.8 L1111.5 235.8 L1112 235.8 L1112.5 235.8 L1113 235.8 L1113.5 235.8 L1114 235.8 L1114.5 235.8 L1115 235.8 L1115.5 235.8 L1116 235.8 L1116.5 235.8 L1117 235.8 L1117.5 235.8 L1118 235.8 L1118.5 235.8 L1119 235.8 L1119.5 235.8 L1120 235.8 L1120.5 235.8 L1121 235.8 L1121.5 235.8 L1122 235.8 L1122.5 235.8 L1123 235.8 L1123.5 235.8 L1124 235.8 L1124.5 235.8 L1125 235.8 L1125.5 235.8 L1126 235.8 L1126.5 235.8 L1127 235.8 L1127.5 235.8 L1128 235.8 L1128.5 235.8 L1129 235.8 L1129.5 235.8 L1130 235.8 L1130.5 235.8 L1131 235.8 L1131.5 235.8 L1132 235.8 L1132.5 235.8 L1133 235.8 L1133.5 235.8 L1134 235.8 L1134.5 235.8 L1135 235.8 L1135.5 235.8 L1136 235.8 L1136.5 235.8 L1137 235.8 L1137.5 235.8 L1138 235.8 L1138.5 235.8 L1139 235.8 L1139.5 235.8 L1140 235.8 L1140.5 235.8 L1141 235.8 L1141.5 235.8 L1142 235.8 L1142.5 235.8 L1143 235.8 L1143.5 235.8 L1144 235.8 L1144.5 235.8 L1145 235.8 L1145.5 235.8 L1146 235.8 L1146.5 235.8 L1147 235.8 L1147.5 235.8 L1148 235.8 L1148.5 235.8 L1149 235.8 L1149.5 235.8 L1150 235.8 L1150.5 235.8 L1151 235.8 L1151.5 235.8 L1152 235.8 L1152.5 235.8 L1153 235.8 L1153.5 235.8 L1154 235.8 L1154.5 235.8 L1155 235.8 L1155.5 235.8 L1156 235.8 L1156.5 235.8 L1157 235.8 L1157.5 235.8 L1158 235.8 L1158.5 235.8 L1159 235.8 L1159.5 235.8 L1160 235.8 L1160.5 235.8 L1161 235.8 L1161.5 235.8 L1162 235.8 L1162.5 235.8 L1163 235.8 L1163.5 235.8 L1164 235.8 L1164.5 235.8 L1165 235.8 L1165.5 235.8 L1166 235.8 L1166.5 235.8 L1167 235.8 L1167.5 235.8 L1168 235.8 L1168.5 235.8 L1169 235.8 L1169.5 235.8 L1170 235.8 L1170.5 235.8 L1171 235.8 L1171.5 235.8 L1172 235.8 L1172.5 235.8 L1173 235.8 L1173.5 235.8 L1174 235.8 L1174.5 235.8 L1175 235.8 L1175.5 235.8 L1176 235.8 L1176.5 235.8 L1177 235.8 L1177.5 235.8 L1178 235.8 L1178.5 235.8 L1179 235.8 L1179.5 235.8 L1180 235.8 L1180.5 235.8 L1181 235.8 L1181.5 235.8 L1182 235.8 L1182.5 235.8 L1183 235.8 L1183.5 235.8 L1184 235.8 L1184.5 235.8 L1185 235.8 L1185.5 229.5 L1186 229.5 L1186.5 229.5 L1187 229.5 L1187.5 229.5 L1188 229.5 L1188.5 229.5 L1189 229.5 L1189.5 229.5 L1190 229.5 L1190.5 229.5 L1191 229.5 L1191.5 229.5 L1192 229.5 L1192.5 229.5 L1193 229.5 L1193.5 229.5 L1194 229.5 L1194.5 229.5 L1195 229.5 L1195.5 229.5 L1196 229.5 L1196.5 229.5 L1197 229.5 L1197.5 229.5 L1198 229.5 L1198.5 229.5 L1199 229.5 L1199.5 229.5 L1200 229.5 L1200.5 229.5 L1201 229.5 L1201.5 229.5 L1202 229.5 L1202.5 229.5 L1203 229.5 L1203.5 229.5 L1204 229.5 L1204.5 229.5 L1205 229.5 L1205.5 229.5 L1206 229.5 L1206.5 229.5 L1207 229.5 L1207.5 229.5 L1208 235.8 L1208.5 235.8 L1209 235.8 L1209.5 235.8 L1210 235.8 L1210.5 235.8 L1211 235.8 L1211.5 235.8 L1212 235.8 L1212.5 235.8 L1213 235.8 L1213.5 235.8 L1214 235.8 L1214.5 235.8 L1215 235.8 L1215.5 235.8 L1216 235.8 L1216.5 235.8 L1217 235.8 L1217.5 235.8 L1218 235.8 L1218.5 235.8 L1219 235.8 L1219.5 235.8 L1220 235.8 L1220.5 235.8 L1221 235.8 L1221.5 235.8 L1222 235.8 L1222.5 235.8 L1223 235.8 L1223.5 235.8 L1224 235.8 L1224.5 235.8 L1225 235.8 L1225.5 235.8 L1226 235.8 L1226.5 235.8 L1227 235.8 L1227.5 235.8 L1228 235.8 L1228.5 235.8 L1229 235.8 L1229.5 235.8 L1230 235.8 L1230.5 235.8 L1231 235.8 L1231.5 235.8 L1232 235.8 L1232.5 235.8 L1233 235.8 L1233.5 235.8 L1234 235.8 L1234.5 235.8 L1235 235.8 L1235.5 235.8 L1236 235.8 L1236.5 235.8 L1237 235.8 L1237.5 235.8 L1238 235.8 L1238.5 235.8 L1239 235.8 L1239.5 235.8 L1240 235.8 L1240.5 235.8 L1241 235.8 L1241.5 235.8 L1242 235.8 L1242.5 235.8 L1243 235.8 L1243.5 235.8 L1244 235.8 L1244.5 235.8 L1245 235.8 L1245.5 235.8 L1246 235.8 L1246.5 235.8 L1247 235.8 L1247.5 235.8 L1248 235.8 L1248.5 235.8 L1249 235.8 L1249.5 235.8 L1250 235.8 L1250.5 235.8 L1251 235.8 L1251.5 235.8 L1252 235.8 L1252.5 235.8 L1253 235.8 L1253.5 235.8 L1254 235.8 L1254.5 235.8 L1255 235.8 L1255.5 235.8 L1256 235.8 L1256.5 235.8 L1257 235.8 L1257.5 235.8 L1258 235.8 L1258.5 235.8 L1259 235.8 L1259.5 235.8 L1260 235.8 L1260.5 235.8 L1261 235.8 L1261.5 235.8 L1262 235.8 L1262.5 235.8 L1263 235.8 L1263.5 235.8 L1264 235.8 L1264.5 235.8 L1265 235.8 L1265.5 235.8 L1266 235.8 L1266.5 235.8 L1267 235.8 L1267.5 235.8 L1268 235.8 L1268.5 235.8 L1269 235.8 L1269.5 235.8 L1270 235.8 L1270.5 235.8 L1271 235.8 L1271.5 235.8 L1272 235.8 L1272.5 235.8 L1273 235.8 L1273.5 235.8 L1274 235.8 L1274.5 235.8 L1275 235.8 L1275.5 235.8 L1276 235.8 L1276.5 235.8 L1277 235.8 L1277.5 235.8 L1278 235.8 L1278.5 235.8 L1279 235.8 L1279.5 235.8 L1280 235.8 L1280.5 235.8 L1281 235.8 L1281.5 235.8 L1282 235.8 L1282.5 235.8 L1283 235.8 L1283.5 235.8 L1284 235.8 L1284.5 235.8 L1285 235.8 L1285.5 235.8 L1286 235.8 L1286.5 235.8 L1287 235.8 L1287.5 235.8 L1288 235.8 L1288.5 235.8 L1289 235.8 L1289.5 235.8 L1290 235.8 L1290.5 235.8 L1291 235.8 L1291.5 235.8 L1292 235.8 L1292.5 235.8 L1293 235.8 L1293.5 235.8 L1294 235.8 L1294.5 235.8 L1295 235.8 L1295.5 235.8 L1296 235.8 L1296.5 235.8 L1297 235.8 L1297.5 235.8 L1298 235.8 L1298.5 235.8 L1299 235.8 L1299.5 235.8 L1300 235.8 L1300.5 235.8 L1301 235.8 L1301.5 235.8 L1302 235.8 L1302.5 235.8 L1303 235.8 L1303.5 235.8 L1304 235.8 L1304.5 235.8 L1305 235.8 L1305.5 235.8 L1306 235.8 L1306.5 235.8 L1307 235.8 L1307.5 235.8 L1308 235.8 L1308.5 235.8 L1309 235.8 L1309.5 235.8 L1310 235.8 L1310.5 235.8 L1311 235.8 L1311.5 235.8 L1312 235.8 L1312.5 235.8 L1313 235.8 L1313.5 235.8 L1314 235.8 L1314.5 235.8 L1315 235.8 L1315.5 235.8 L1316 235.8 L1316.5 235.8 L1317 235.8 L1317.5 235.8 L1318 235.8 L1318.5 235.8 L1319 235.8 L1319.5 235.8 L1320 235.8 L1320.5 235.8 L1321 235.8 L1321.5 235.8 L1322 235.8 L1322.5 235.8 L1323 235.8 L1323.5 235.8 L1324 235.8 L1324.5 235.8 L1325 235.8 L1325.5 235.8 L1326 235.8 L1326.5 235.8 L1327 235.8 L1327.5 235.8 L1328 235.8 L1328.5 235.8 L1329 235.8 L1329.5 235.8 L1330 235.8 L1330.5 235.8 L1331 235.8 L1331.5 235.8 L1332 235.8 L1332.5 235.8 L1333 235.8 L1333.5 235.8 L1334 235.8 L1334.5 235.8 L1335 235.8 L1335.5 235.8 L1336 235.8 L1336.5 235.8 L1337 235.8 L1337.5 235.8 L1338 235.8 L1338.5 235.8 L1339 235.8 L1339.5 235.8 L1340 235.8 L1340.5 235.8 L1341 235.8 L1341.5 235.8 L1342 235.8 L1342.5 235.8 L1343 235.8" fill="none" stroke="#00e8f0" stroke-width="2"/><path d="M754 186.5 H773 V205 L763.5 211 L754 205Z" fill="#ffff00" stroke="#222" stroke-width="0.8"/><path d="M757 190.5 H770 M763.5 190.5 V207" stroke="#333" stroke-width="1.2" fill="none"/><rect x="1341" y="165" width="3" height="2" fill="#00e0f0"/><rect x="24" y="295" width="1400" height="510" fill="#2a2f2f"/><rect x="22.5" y="293.5" width="1400" height="513" fill="none" stroke="#20a08c" stroke-width="3"/><path d="M165.5 304.04 H168.5 M165.5 314.28 H168.5 M165.5 324.52 H168.5 M165.5 334.76 H168.5 M165.5 345 H168.5 M167 343.5 V346.5 M165.5 355.24 H168.5 M165.5 365.48 H168.5 M165.5 375.72 H168.5 M165.5 385.96 H168.5 M165.5 396.2 H168.5 M167 394.7 V397.7 M165.5 406.44 H168.5 M165.5 416.68 H168.5 M165.5 426.92 H168.5 M165.5 437.16 H168.5 M165.5 447.4 H168.5 M167 445.9 V448.9 M165.5 457.64 H168.5 M165.5 467.88 H168.5 M165.5 478.12 H168.5 M165.5 488.36 H168.5 M165.5 498.6 H168.5 M167 497.1 V500.1 M165.5 508.84 H168.5 M165.5 519.08 H168.5 M165.5 529.32 H168.5 M165.5 539.56 H168.5 M165.5 549.8 H168.5 M167 548.3 V551.3 M165.5 560.04 H168.5 M165.5 570.28 H168.5 M165.5 580.52 H168.5 M165.5 590.76 H168.5 M165.5 601 H168.5 M167 599.5 V602.5 M165.5 611.24 H168.5 M165.5 621.48 H168.5 M165.5 631.72 H168.5 M165.5 641.96 H168.5 M165.5 652.2 H168.5 M167 650.7 V653.7 M165.5 662.44 H168.5 M165.5 672.68 H168.5 M165.5 682.92 H168.5 M165.5 693.16 H168.5 M165.5 703.4 H168.5 M167 701.9 V704.9 M165.5 713.64 H168.5 M165.5 723.88 H168.5 M165.5 734.12 H168.5 M165.5 744.36 H168.5 M165.5 754.6 H168.5 M167 753.1 V756.1 M165.5 764.84 H168.5 M165.5 775.08 H168.5 M165.5 785.32 H168.5 M165.5 795.56 H168.5 M310.2 304.04 H313.2 M310.2 314.28 H313.2 M310.2 324.52 H313.2 M310.2 334.76 H313.2 M310.2 345 H313.2 M311.7 343.5 V346.5 M310.2 355.24 H313.2 M310.2 365.48 H313.2 M310.2 375.72 H313.2 M310.2 385.96 H313.2 M310.2 396.2 H313.2 M311.7 394.7 V397.7 M310.2 406.44 H313.2 M310.2 416.68 H313.2 M310.2 426.92 H313.2 M310.2 437.16 H313.2 M310.2 447.4 H313.2 M311.7 445.9 V448.9 M310.2 457.64 H313.2 M310.2 467.88 H313.2 M310.2 478.12 H313.2 M310.2 488.36 H313.2 M310.2 498.6 H313.2 M311.7 497.1 V500.1 M310.2 508.84 H313.2 M310.2 519.08 H313.2 M310.2 529.32 H313.2 M310.2 539.56 H313.2 M310.2 549.8 H313.2 M311.7 548.3 V551.3 M310.2 560.04 H313.2 M310.2 570.28 H313.2 M310.2 580.52 H313.2 M310.2 590.76 H313.2 M310.2 601 H313.2 M311.7 599.5 V602.5 M310.2 611.24 H313.2 M310.2 621.48 H313.2 M310.2 631.72 H313.2 M310.2 641.96 H313.2 M310.2 652.2 H313.2 M311.7 650.7 V653.7 M310.2 662.44 H313.2 M310.2 672.68 H313.2 M310.2 682.92 H313.2 M310.2 693.16 H313.2 M310.2 703.4 H313.2 M311.7 701.9 V704.9 M310.2 713.64 H313.2 M310.2 723.88 H313.2 M310.2 734.12 H313.2 M310.2 744.36 H313.2 M310.2 754.6 H313.2 M311.7 753.1 V756.1 M310.2 764.84 H313.2 M310.2 775.08 H313.2 M310.2 785.32 H313.2 M310.2 795.56 H313.2 M454.9 304.04 H457.9 M454.9 314.28 H457.9 M454.9 324.52 H457.9 M454.9 334.76 H457.9 M454.9 345 H457.9 M456.4 343.5 V346.5 M454.9 355.24 H457.9 M454.9 365.48 H457.9 M454.9 375.72 H457.9 M454.9 385.96 H457.9 M454.9 396.2 H457.9 M456.4 394.7 V397.7 M454.9 406.44 H457.9 M454.9 416.68 H457.9 M454.9 426.92 H457.9 M454.9 437.16 H457.9 M454.9 447.4 H457.9 M456.4 445.9 V448.9 M454.9 457.64 H457.9 M454.9 467.88 H457.9 M454.9 478.12 H457.9 M454.9 488.36 H457.9 M454.9 498.6 H457.9 M456.4 497.1 V500.1 M454.9 508.84 H457.9 M454.9 519.08 H457.9 M454.9 529.32 H457.9 M454.9 539.56 H457.9 M454.9 549.8 H457.9 M456.4 548.3 V551.3 M454.9 560.04 H457.9 M454.9 570.28 H457.9 M454.9 580.52 H457.9 M454.9 590.76 H457.9 M454.9 601 H457.9 M456.4 599.5 V602.5 M454.9 611.24 H457.9 M454.9 621.48 H457.9 M454.9 631.72 H457.9 M454.9 641.96 H457.9 M454.9 652.2 H457.9 M456.4 650.7 V653.7 M454.9 662.44 H457.9 M454.9 672.68 H457.9 M454.9 682.92 H457.9 M454.9 693.16 H457.9 M454.9 703.4 H457.9 M456.4 701.9 V704.9 M454.9 713.64 H457.9 M454.9 723.88 H457.9 M454.9 734.12 H457.9 M454.9 744.36 H457.9 M454.9 754.6 H457.9 M456.4 753.1 V756.1 M454.9 764.84 H457.9 M454.9 775.08 H457.9 M454.9 785.32 H457.9 M454.9 795.56 H457.9 M599.6 304.04 H602.6 M599.6 314.28 H602.6 M599.6 324.52 H602.6 M599.6 334.76 H602.6 M599.6 345 H602.6 M601.1 343.5 V346.5 M599.6 355.24 H602.6 M599.6 365.48 H602.6 M599.6 375.72 H602.6 M599.6 385.96 H602.6 M599.6 396.2 H602.6 M601.1 394.7 V397.7 M599.6 406.44 H602.6 M599.6 416.68 H602.6 M599.6 426.92 H602.6 M599.6 437.16 H602.6 M599.6 447.4 H602.6 M601.1 445.9 V448.9 M599.6 457.64 H602.6 M599.6 467.88 H602.6 M599.6 478.12 H602.6 M599.6 488.36 H602.6 M599.6 498.6 H602.6 M601.1 497.1 V500.1 M599.6 508.84 H602.6 M599.6 519.08 H602.6 M599.6 529.32 H602.6 M599.6 539.56 H602.6 M599.6 549.8 H602.6 M601.1 548.3 V551.3 M599.6 560.04 H602.6 M599.6 570.28 H602.6 M599.6 580.52 H602.6 M599.6 590.76 H602.6 M599.6 601 H602.6 M601.1 599.5 V602.5 M599.6 611.24 H602.6 M599.6 621.48 H602.6 M599.6 631.72 H602.6 M599.6 641.96 H602.6 M599.6 652.2 H602.6 M601.1 650.7 V653.7 M599.6 662.44 H602.6 M599.6 672.68 H602.6 M599.6 682.92 H602.6 M599.6 693.16 H602.6 M599.6 703.4 H602.6 M601.1 701.9 V704.9 M599.6 713.64 H602.6 M599.6 723.88 H602.6 M599.6 734.12 H602.6 M599.6 744.36 H602.6 M599.6 754.6 H602.6 M601.1 753.1 V756.1 M599.6 764.84 H602.6 M599.6 775.08 H602.6 M599.6 785.32 H602.6 M599.6 795.56 H602.6 M744.3 304.04 H747.3 M744.3 314.28 H747.3 M744.3 324.52 H747.3 M744.3 334.76 H747.3 M743.3 345 H748.3 M745.8 342.5 V347.5 M744.3 355.24 H747.3 M744.3 365.48 H747.3 M744.3 375.72 H747.3 M744.3 385.96 H747.3 M743.3 396.2 H748.3 M745.8 393.7 V398.7 M744.3 406.44 H747.3 M744.3 416.68 H747.3 M744.3 426.92 H747.3 M744.3 437.16 H747.3 M743.3 447.4 H748.3 M745.8 444.9 V449.9 M744.3 457.64 H747.3 M744.3 467.88 H747.3 M744.3 478.12 H747.3 M744.3 488.36 H747.3 M743.3 498.6 H748.3 M745.8 496.1 V501.1 M744.3 508.84 H747.3 M744.3 519.08 H747.3 M744.3 529.32 H747.3 M744.3 539.56 H747.3 M743.3 549.8 H748.3 M745.8 547.3 V552.3 M744.3 560.04 H747.3 M744.3 570.28 H747.3 M744.3 580.52 H747.3 M744.3 590.76 H747.3 M743.3 601 H748.3 M745.8 598.5 V603.5 M744.3 611.24 H747.3 M744.3 621.48 H747.3 M744.3 631.72 H747.3 M744.3 641.96 H747.3 M743.3 652.2 H748.3 M745.8 649.7 V654.7 M744.3 662.44 H747.3 M744.3 672.68 H747.3 M744.3 682.92 H747.3 M744.3 693.16 H747.3 M743.3 703.4 H748.3 M745.8 700.9 V705.9 M744.3 713.64 H747.3 M744.3 723.88 H747.3 M744.3 734.12 H747.3 M744.3 744.36 H747.3 M743.3 754.6 H748.3 M745.8 752.1 V757.1 M744.3 764.84 H747.3 M744.3 775.08 H747.3 M744.3 785.32 H747.3 M744.3 795.56 H747.3 M889 304.04 H892 M889 314.28 H892 M889 324.52 H892 M889 334.76 H892 M889 345 H892 M890.5 343.5 V346.5 M889 355.24 H892 M889 365.48 H892 M889 375.72 H892 M889 385.96 H892 M889 396.2 H892 M890.5 394.7 V397.7 M889 406.44 H892 M889 416.68 H892 M889 426.92 H892 M889 437.16 H892 M889 447.4 H892 M890.5 445.9 V448.9 M889 457.64 H892 M889 467.88 H892 M889 478.12 H892 M889 488.36 H892 M889 498.6 H892 M890.5 497.1 V500.1 M889 508.84 H892 M889 519.08 H892 M889 529.32 H892 M889 539.56 H892 M889 549.8 H892 M890.5 548.3 V551.3 M889 560.04 H892 M889 570.28 H892 M889 580.52 H892 M889 590.76 H892 M889 601 H892 M890.5 599.5 V602.5 M889 611.24 H892 M889 621.48 H892 M889 631.72 H892 M889 641.96 H892 M889 652.2 H892 M890.5 650.7 V653.7 M889 662.44 H892 M889 672.68 H892 M889 682.92 H892 M889 693.16 H892 M889 703.4 H892 M890.5 701.9 V704.9 M889 713.64 H892 M889 723.88 H892 M889 734.12 H892 M889 744.36 H892 M889 754.6 H892 M890.5 753.1 V756.1 M889 764.84 H892 M889 775.08 H892 M889 785.32 H892 M889 795.56 H892 M1033.7 304.04 H1036.7 M1033.7 314.28 H1036.7 M1033.7 324.52 H1036.7 M1033.7 334.76 H1036.7 M1033.7 345 H1036.7 M1035.2 343.5 V346.5 M1033.7 355.24 H1036.7 M1033.7 365.48 H1036.7 M1033.7 375.72 H1036.7 M1033.7 385.96 H1036.7 M1033.7 396.2 H1036.7 M1035.2 394.7 V397.7 M1033.7 406.44 H1036.7 M1033.7 416.68 H1036.7 M1033.7 426.92 H1036.7 M1033.7 437.16 H1036.7 M1033.7 447.4 H1036.7 M1035.2 445.9 V448.9 M1033.7 457.64 H1036.7 M1033.7 467.88 H1036.7 M1033.7 478.12 H1036.7 M1033.7 488.36 H1036.7 M1033.7 498.6 H1036.7 M1035.2 497.1 V500.1 M1033.7 508.84 H1036.7 M1033.7 519.08 H1036.7 M1033.7 529.32 H1036.7 M1033.7 539.56 H1036.7 M1033.7 549.8 H1036.7 M1035.2 548.3 V551.3 M1033.7 560.04 H1036.7 M1033.7 570.28 H1036.7 M1033.7 580.52 H1036.7 M1033.7 590.76 H1036.7 M1033.7 601 H1036.7 M1035.2 599.5 V602.5 M1033.7 611.24 H1036.7 M1033.7 621.48 H1036.7 M1033.7 631.72 H1036.7 M1033.7 641.96 H1036.7 M1033.7 652.2 H1036.7 M1035.2 650.7 V653.7 M1033.7 662.44 H1036.7 M1033.7 672.68 H1036.7 M1033.7 682.92 H1036.7 M1033.7 693.16 H1036.7 M1033.7 703.4 H1036.7 M1035.2 701.9 V704.9 M1033.7 713.64 H1036.7 M1033.7 723.88 H1036.7 M1033.7 734.12 H1036.7 M1033.7 744.36 H1036.7 M1033.7 754.6 H1036.7 M1035.2 753.1 V756.1 M1033.7 764.84 H1036.7 M1033.7 775.08 H1036.7 M1033.7 785.32 H1036.7 M1033.7 795.56 H1036.7 M1178.4 304.04 H1181.4 M1178.4 314.28 H1181.4 M1178.4 324.52 H1181.4 M1178.4 334.76 H1181.4 M1178.4 345 H1181.4 M1179.9 343.5 V346.5 M1178.4 355.24 H1181.4 M1178.4 365.48 H1181.4 M1178.4 375.72 H1181.4 M1178.4 385.96 H1181.4 M1178.4 396.2 H1181.4 M1179.9 394.7 V397.7 M1178.4 406.44 H1181.4 M1178.4 416.68 H1181.4 M1178.4 426.92 H1181.4 M1178.4 437.16 H1181.4 M1178.4 447.4 H1181.4 M1179.9 445.9 V448.9 M1178.4 457.64 H1181.4 M1178.4 467.88 H1181.4 M1178.4 478.12 H1181.4 M1178.4 488.36 H1181.4 M1178.4 498.6 H1181.4 M1179.9 497.1 V500.1 M1178.4 508.84 H1181.4 M1178.4 519.08 H1181.4 M1178.4 529.32 H1181.4 M1178.4 539.56 H1181.4 M1178.4 549.8 H1181.4 M1179.9 548.3 V551.3 M1178.4 560.04 H1181.4 M1178.4 570.28 H1181.4 M1178.4 580.52 H1181.4 M1178.4 590.76 H1181.4 M1178.4 601 H1181.4 M1179.9 599.5 V602.5 M1178.4 611.24 H1181.4 M1178.4 621.48 H1181.4 M1178.4 631.72 H1181.4 M1178.4 641.96 H1181.4 M1178.4 652.2 H1181.4 M1179.9 650.7 V653.7 M1178.4 662.44 H1181.4 M1178.4 672.68 H1181.4 M1178.4 682.92 H1181.4 M1178.4 693.16 H1181.4 M1178.4 703.4 H1181.4 M1179.9 701.9 V704.9 M1178.4 713.64 H1181.4 M1178.4 723.88 H1181.4 M1178.4 734.12 H1181.4 M1178.4 744.36 H1181.4 M1178.4 754.6 H1181.4 M1179.9 753.1 V756.1 M1178.4 764.84 H1181.4 M1178.4 775.08 H1181.4 M1178.4 785.32 H1181.4 M1178.4 795.56 H1181.4 M1323.1 304.04 H1326.1 M1323.1 314.28 H1326.1 M1323.1 324.52 H1326.1 M1323.1 334.76 H1326.1 M1323.1 345 H1326.1 M1324.6 343.5 V346.5 M1323.1 355.24 H1326.1 M1323.1 365.48 H1326.1 M1323.1 375.72 H1326.1 M1323.1 385.96 H1326.1 M1323.1 396.2 H1326.1 M1324.6 394.7 V397.7 M1323.1 406.44 H1326.1 M1323.1 416.68 H1326.1 M1323.1 426.92 H1326.1 M1323.1 437.16 H1326.1 M1323.1 447.4 H1326.1 M1324.6 445.9 V448.9 M1323.1 457.64 H1326.1 M1323.1 467.88 H1326.1 M1323.1 478.12 H1326.1 M1323.1 488.36 H1326.1 M1323.1 498.6 H1326.1 M1324.6 497.1 V500.1 M1323.1 508.84 H1326.1 M1323.1 519.08 H1326.1 M1323.1 529.32 H1326.1 M1323.1 539.56 H1326.1 M1323.1 549.8 H1326.1 M1324.6 548.3 V551.3 M1323.1 560.04 H1326.1 M1323.1 570.28 H1326.1 M1323.1 580.52 H1326.1 M1323.1 590.76 H1326.1 M1323.1 601 H1326.1 M1324.6 599.5 V602.5 M1323.1 611.24 H1326.1 M1323.1 621.48 H1326.1 M1323.1 631.72 H1326.1 M1323.1 641.96 H1326.1 M1323.1 652.2 H1326.1 M1324.6 650.7 V653.7 M1323.1 662.44 H1326.1 M1323.1 672.68 H1326.1 M1323.1 682.92 H1326.1 M1323.1 693.16 H1326.1 M1323.1 703.4 H1326.1 M1324.6 701.9 V704.9 M1323.1 713.64 H1326.1 M1323.1 723.88 H1326.1 M1323.1 734.12 H1326.1 M1323.1 744.36 H1326.1 M1323.1 754.6 H1326.1 M1324.6 753.1 V756.1 M1323.1 764.84 H1326.1 M1323.1 775.08 H1326.1 M1323.1 785.32 H1326.1 M1323.1 795.56 H1326.1 M51.24 343.5 V346.5 M80.18 343.5 V346.5 M109.12 343.5 V346.5 M138.06 343.5 V346.5 M195.94 343.5 V346.5 M224.88 343.5 V346.5 M253.82 343.5 V346.5 M282.76 343.5 V346.5 M340.64 343.5 V346.5 M369.58 343.5 V346.5 M398.52 343.5 V346.5 M427.46 343.5 V346.5 M485.34 343.5 V346.5 M514.28 343.5 V346.5 M543.22 343.5 V346.5 M572.16 343.5 V346.5 M630.04 343.5 V346.5 M658.98 343.5 V346.5 M687.92 343.5 V346.5 M716.86 343.5 V346.5 M774.74 343.5 V346.5 M803.68 343.5 V346.5 M832.62 343.5 V346.5 M861.56 343.5 V346.5 M919.44 343.5 V346.5 M948.38 343.5 V346.5 M977.32 343.5 V346.5 M1006.26 343.5 V346.5 M1064.14 343.5 V346.5 M1093.08 343.5 V346.5 M1122.02 343.5 V346.5 M1150.96 343.5 V346.5 M1208.84 343.5 V346.5 M1237.78 343.5 V346.5 M1266.72 343.5 V346.5 M1295.66 343.5 V346.5 M51.24 394.7 V397.7 M80.18 394.7 V397.7 M109.12 394.7 V397.7 M138.06 394.7 V397.7 M195.94 394.7 V397.7 M224.88 394.7 V397.7 M253.82 394.7 V397.7 M282.76 394.7 V397.7 M340.64 394.7 V397.7 M369.58 394.7 V397.7 M398.52 394.7 V397.7 M427.46 394.7 V397.7 M485.34 394.7 V397.7 M514.28 394.7 V397.7 M543.22 394.7 V397.7 M572.16 394.7 V397.7 M630.04 394.7 V397.7 M658.98 394.7 V397.7 M687.92 394.7 V397.7 M716.86 394.7 V397.7 M774.74 394.7 V397.7 M803.68 394.7 V397.7 M832.62 394.7 V397.7 M861.56 394.7 V397.7 M919.44 394.7 V397.7 M948.38 394.7 V397.7 M977.32 394.7 V397.7 M1006.26 394.7 V397.7 M1064.14 394.7 V397.7 M1093.08 394.7 V397.7 M1122.02 394.7 V397.7 M1150.96 394.7 V397.7 M1208.84 394.7 V397.7 M1237.78 394.7 V397.7 M1266.72 394.7 V397.7 M1295.66 394.7 V397.7 M51.24 445.9 V448.9 M80.18 445.9 V448.9 M109.12 445.9 V448.9 M138.06 445.9 V448.9 M195.94 445.9 V448.9 M224.88 445.9 V448.9 M253.82 445.9 V448.9 M282.76 445.9 V448.9 M340.64 445.9 V448.9 M369.58 445.9 V448.9 M398.52 445.9 V448.9 M427.46 445.9 V448.9 M485.34 445.9 V448.9 M514.28 445.9 V448.9 M543.22 445.9 V448.9 M572.16 445.9 V448.9 M630.04 445.9 V448.9 M658.98 445.9 V448.9 M687.92 445.9 V448.9 M716.86 445.9 V448.9 M774.74 445.9 V448.9 M803.68 445.9 V448.9 M832.62 445.9 V448.9 M861.56 445.9 V448.9 M919.44 445.9 V448.9 M948.38 445.9 V448.9 M977.32 445.9 V448.9 M1006.26 445.9 V448.9 M1064.14 445.9 V448.9 M1093.08 445.9 V448.9 M1122.02 445.9 V448.9 M1150.96 445.9 V448.9 M1208.84 445.9 V448.9 M1237.78 445.9 V448.9 M1266.72 445.9 V448.9 M1295.66 445.9 V448.9 M51.24 497.1 V500.1 M80.18 497.1 V500.1 M109.12 497.1 V500.1 M138.06 497.1 V500.1 M195.94 497.1 V500.1 M224.88 497.1 V500.1 M253.82 497.1 V500.1 M282.76 497.1 V500.1 M340.64 497.1 V500.1 M369.58 497.1 V500.1 M398.52 497.1 V500.1 M427.46 497.1 V500.1 M485.34 497.1 V500.1 M514.28 497.1 V500.1 M543.22 497.1 V500.1 M572.16 497.1 V500.1 M630.04 497.1 V500.1 M658.98 497.1 V500.1 M687.92 497.1 V500.1 M716.86 497.1 V500.1 M774.74 497.1 V500.1 M803.68 497.1 V500.1 M832.62 497.1 V500.1 M861.56 497.1 V500.1 M919.44 497.1 V500.1 M948.38 497.1 V500.1 M977.32 497.1 V500.1 M1006.26 497.1 V500.1 M1064.14 497.1 V500.1 M1093.08 497.1 V500.1 M1122.02 497.1 V500.1 M1150.96 497.1 V500.1 M1208.84 497.1 V500.1 M1237.78 497.1 V500.1 M1266.72 497.1 V500.1 M1295.66 497.1 V500.1 M51.24 548.3 V551.3 M80.18 548.3 V551.3 M109.12 548.3 V551.3 M138.06 548.3 V551.3 M195.94 548.3 V551.3 M224.88 548.3 V551.3 M253.82 548.3 V551.3 M282.76 548.3 V551.3 M340.64 548.3 V551.3 M369.58 548.3 V551.3 M398.52 548.3 V551.3 M427.46 548.3 V551.3 M485.34 548.3 V551.3 M514.28 548.3 V551.3 M543.22 548.3 V551.3 M572.16 548.3 V551.3 M630.04 548.3 V551.3 M658.98 548.3 V551.3 M687.92 548.3 V551.3 M716.86 548.3 V551.3 M774.74 548.3 V551.3 M803.68 548.3 V551.3 M832.62 548.3 V551.3 M861.56 548.3 V551.3 M919.44 548.3 V551.3 M948.38 548.3 V551.3 M977.32 548.3 V551.3 M1006.26 548.3 V551.3 M1064.14 548.3 V551.3 M1093.08 548.3 V551.3 M1122.02 548.3 V551.3 M1150.96 548.3 V551.3 M1208.84 548.3 V551.3 M1237.78 548.3 V551.3 M1266.72 548.3 V551.3 M1295.66 548.3 V551.3 M51.24 599.5 V602.5 M80.18 599.5 V602.5 M109.12 599.5 V602.5 M138.06 599.5 V602.5 M195.94 599.5 V602.5 M224.88 599.5 V602.5 M253.82 599.5 V602.5 M282.76 599.5 V602.5 M340.64 599.5 V602.5 M369.58 599.5 V602.5 M398.52 599.5 V602.5 M427.46 599.5 V602.5 M485.34 599.5 V602.5 M514.28 599.5 V602.5 M543.22 599.5 V602.5 M572.16 599.5 V602.5 M630.04 599.5 V602.5 M658.98 599.5 V602.5 M687.92 599.5 V602.5 M716.86 599.5 V602.5 M774.74 599.5 V602.5 M803.68 599.5 V602.5 M832.62 599.5 V602.5 M861.56 599.5 V602.5 M919.44 599.5 V602.5 M948.38 599.5 V602.5 M977.32 599.5 V602.5 M1006.26 599.5 V602.5 M1064.14 599.5 V602.5 M1093.08 599.5 V602.5 M1122.02 599.5 V602.5 M1150.96 599.5 V602.5 M1208.84 599.5 V602.5 M1237.78 599.5 V602.5 M1266.72 599.5 V602.5 M1295.66 599.5 V602.5 M51.24 650.7 V653.7 M80.18 650.7 V653.7 M109.12 650.7 V653.7 M138.06 650.7 V653.7 M195.94 650.7 V653.7 M224.88 650.7 V653.7 M253.82 650.7 V653.7 M282.76 650.7 V653.7 M340.64 650.7 V653.7 M369.58 650.7 V653.7 M398.52 650.7 V653.7 M427.46 650.7 V653.7 M485.34 650.7 V653.7 M514.28 650.7 V653.7 M543.22 650.7 V653.7 M572.16 650.7 V653.7 M630.04 650.7 V653.7 M658.98 650.7 V653.7 M687.92 650.7 V653.7 M716.86 650.7 V653.7 M774.74 650.7 V653.7 M803.68 650.7 V653.7 M832.62 650.7 V653.7 M861.56 650.7 V653.7 M919.44 650.7 V653.7 M948.38 650.7 V653.7 M977.32 650.7 V653.7 M1006.26 650.7 V653.7 M1064.14 650.7 V653.7 M1093.08 650.7 V653.7 M1122.02 650.7 V653.7 M1150.96 650.7 V653.7 M1208.84 650.7 V653.7 M1237.78 650.7 V653.7 M1266.72 650.7 V653.7 M1295.66 650.7 V653.7 M51.24 701.9 V704.9 M80.18 701.9 V704.9 M109.12 701.9 V704.9 M138.06 701.9 V704.9 M195.94 701.9 V704.9 M224.88 701.9 V704.9 M253.82 701.9 V704.9 M282.76 701.9 V704.9 M340.64 701.9 V704.9 M369.58 701.9 V704.9 M398.52 701.9 V704.9 M427.46 701.9 V704.9 M485.34 701.9 V704.9 M514.28 701.9 V704.9 M543.22 701.9 V704.9 M572.16 701.9 V704.9 M630.04 701.9 V704.9 M658.98 701.9 V704.9 M687.92 701.9 V704.9 M716.86 701.9 V704.9 M774.74 701.9 V704.9 M803.68 701.9 V704.9 M832.62 701.9 V704.9 M861.56 701.9 V704.9 M919.44 701.9 V704.9 M948.38 701.9 V704.9 M977.32 701.9 V704.9 M1006.26 701.9 V704.9 M1064.14 701.9 V704.9 M1093.08 701.9 V704.9 M1122.02 701.9 V704.9 M1150.96 701.9 V704.9 M1208.84 701.9 V704.9 M1237.78 701.9 V704.9 M1266.72 701.9 V704.9 M1295.66 701.9 V704.9 M51.24 753.1 V756.1 M80.18 753.1 V756.1 M109.12 753.1 V756.1 M138.06 753.1 V756.1 M195.94 753.1 V756.1 M224.88 753.1 V756.1 M253.82 753.1 V756.1 M282.76 753.1 V756.1 M340.64 753.1 V756.1 M369.58 753.1 V756.1 M398.52 753.1 V756.1 M427.46 753.1 V756.1 M485.34 753.1 V756.1 M514.28 753.1 V756.1 M543.22 753.1 V756.1 M572.16 753.1 V756.1 M630.04 753.1 V756.1 M658.98 753.1 V756.1 M687.92 753.1 V756.1 M716.86 753.1 V756.1 M774.74 753.1 V756.1 M803.68 753.1 V756.1 M832.62 753.1 V756.1 M861.56 753.1 V756.1 M919.44 753.1 V756.1 M948.38 753.1 V756.1 M977.32 753.1 V756.1 M1006.26 753.1 V756.1 M1064.14 753.1 V756.1 M1093.08 753.1 V756.1 M1122.02 753.1 V756.1 M1150.96 753.1 V756.1 M1208.84 753.1 V756.1 M1237.78 753.1 V756.1 M1266.72 753.1 V756.1 M1295.66 753.1 V756.1" stroke="#2a9a8c" stroke-width="1" fill="none" shape-rendering="crispEdges"/><path d="M23.5 541 L24.5 527 L25 525.5 L25 525.5 L27.75 528.3 L30.5 525.5 L30.8 525.5 L33.24 525.5 L35.99 528.3 L38.74 525.5 L39.47 525.5 L42.22 528.3 L44.97 525.5 L45.98 525.5 L48.73 528.3 L51.48 525.5 L52.35 525.5 L55.1 528.3 L57.85 525.5 L58.03 525.5 L60.78 528.3 L63.53 525.5 L65.18 525.5 L67.93 528.3 L70.68 525.5 L71.13 525.5 L78.82 525.5 L83.2 525.5 L85.48 525.5 L89.21 525.5 L91.96 528.3 L94.71 525.5 L94.95 525.5 L97.7 528.3 L100.45 525.5 L102.08 525.5 L104.83 528.3 L107.58 525.5 L108.75 525.5 L112.98 525.5 L115.73 528.3 L118.48 525.5 L118.61 525.5 L121.36 528.3 L124.11 525.5 L124.52 525.5 L129.08 525.5 L131.83 528.3 L134.58 525.5 L135.75 525.5 L138.5 528.3 L141.25 525.5 L141.85 525.5 L148.05 525.5 L150.8 528.3 L153.55 525.5 L154.7 525.5 L157.45 528.3 L160.2 525.5 L161.95 525.5 L165.67 525.5 L168.38 525.5 L171.13 528.3 L173.88 525.5 L175.4 525.5 L178.15 528.3 L180.9 525.5 L181.88 525.5 L184.63 528.3 L187.38 525.5 L188.71 525.5 L194.15 525.5 L198.03 525.5 L203.6 525.5 L208.34 525.5 L216 525.5 L218.75 528.3 L221.5 525.5 L222.83 525.5 L225.58 528.3 L228.33 525.5 L229.74 525.5 L237.69 525.5 L241.4 525.5 L244.15 528.3 L246.9 525.5 L248.24 525.5 L250.99 528.3 L253.74 525.5 L254.66 525.5 L257.41 528.3 L260.16 525.5 L260.4 525.5 L263.15 528.3 L265.9 525.5 L267.43 525.5 L270.18 528.3 L272.93 525.5 L273.43 525.5 L276.18 528.3 L278.93 525.5 L280.67 525.5 L283.42 528.3 L286.17 525.5 L287.07 525.5 L289.82 528.3 L292.57 525.5 L294.34 525.5 L301.52 525.5 L304.27 528.3 L307.02 525.5 L307.85 525.5 L310.6 528.3 L313.35 525.5 L311.5 525.5 L313 535 L314 547.5 L315 548.5 L317.91 548.5 L319.66 550.8 L321.41 548.5 L321.87 548.5 L323.62 550.8 L325.37 548.5 L326.34 548.5 L327.7 548.5 L329.5 532.5 L330.7 530.5 L331.7 530.5 L333.2 533 L334.7 530.5 L335.54 530.5 L340.94 530.5 L347.08 530.5 L352.78 530.5 L355.11 530.5 L361.79 530.5 L368.58 530.5 L372.97 530.5 L374.47 533 L375.97 530.5 L377.24 530.5 L378.74 533 L380.24 530.5 L380.37 530.5 L381.87 533 L383.37 530.5 L383.7 530.5 L386.01 530.5 L387.51 533 L389.01 530.5 L389.32 530.5 L390.82 533 L392.32 530.5 L393.04 530.5 L394.54 533 L396.04 530.5 L397.79 530.5 L400.8 530.5 L402.3 548.5 L403.3 548.5 L405.05 550.8 L406.8 548.5 L407.49 548.5 L409.24 550.8 L410.99 548.5 L411.24 548.5 L419.2 548.5 L420.95 550.8 L422.7 548.5 L423.67 548.5 L425.42 550.8 L427.17 548.5 L427.37 548.5 L429.12 550.8 L430.87 548.5 L431.4 548.5 L434.37 548.5 L436.12 550.8 L437.87 548.5 L439.77 548.5 L442.65 548.5 L444.81 548.5 L452.68 548.5 L458.86 548.5 L460.61 550.8 L462.36 548.5 L463.09 548.5 L464.84 550.8 L466.59 548.5 L468.14 548.5 L472.6 548.5 L474.4 527.2 L475.6 525.2 L476.6 525.2 L479.94 525.2 L487.85 525.2 L494.68 525.2 L501.12 525.2 L506.23 525.2 L508.4 525.2 L509.9 523.2 L511.4 525.2 L511.96 525.2 L518.12 525.2 L522.8 525.2 L530.73 525.2 L534.92 525.2 L538.28 525.2 L541.5 525.2 L547.1 525.2 L548.6 548.5 L549.6 548.5 L554.48 548.5 L561.27 548.5 L563.02 550.8 L564.77 548.5 L566.1 548.5 L572.79 548.5 L577.66 548.5 L579.41 550.8 L581.16 548.5 L582.74 548.5 L584.49 550.8 L586.24 548.5 L587.84 548.5 L592.21 548.5 L593.96 550.8 L595.71 548.5 L597.61 548.5 L600.63 548.5 L602.38 550.8 L604.13 548.5 L604.43 548.5 L611.27 548.5 L613.02 550.8 L614.77 548.5 L616.42 548.5 L618.7 548.5 L620.5 522.8 L621.7 520.8 L622.7 520.8 L624.2 522.8 L625.7 520.8 L626.8 520.8 L628.3 522.8 L629.8 520.8 L629.83 520.8 L635.72 520.8 L637.22 522.8 L638.72 520.8 L640.59 520.8 L642.09 522.8 L643.59 520.8 L645.33 520.8 L648.6 520.8 L650.1 522.8 L651.6 520.8 L652.19 520.8 L653.69 522.8 L655.19 520.8 L656.36 520.8 L657.86 522.8 L659.36 520.8 L660.2 520.8 L661.7 522.8 L663.2 520.8 L665.02 520.8 L666.52 522.8 L668.02 520.8 L668.93 520.8 L670.43 522.8 L671.93 520.8 L673.74 520.8 L675.24 522.8 L676.74 520.8 L678.58 520.8 L680.08 522.8 L681.58 520.8 L682.64 520.8 L684.14 522.8 L685.64 520.8 L685.68 520.8 L687.18 522.8 L688.68 520.8 L689.05 520.8 L690.55 522.8 L692.05 520.8 L690.4 520.8 L691.9 548.5 L692.9 548.5 L694.65 550.8 L696.4 548.5 L697.35 548.5 L702.69 548.5 L704.44 550.8 L706.19 548.5 L707.22 548.5 L713.93 548.5 L715.68 550.8 L717.43 548.5 L718.55 548.5 L720.3 550.8 L722.05 548.5 L722.6 548.5 L727.65 548.5 L734.21 548.5 L738.87 548.5 L743.9 548.5 L750.06 548.5 L751.81 550.8 L753.56 548.5 L754.62 548.5 L756.37 550.8 L758.12 548.5 L760.01 548.5 L761.5 548.5 L763.3 403.2 L764.5 401.2 L765.5 401.2 L769.06 401.2 L776.72 401.2 L779.54 401.2 L781.04 399 L782.54 401.2 L783.42 401.2 L784.92 399 L786.42 401.2 L786.91 401.2 L788.41 399 L789.91 401.2 L791.24 401.2 L798.63 401.2 L800.13 399 L801.63 401.2 L803.06 401.2 L805.92 401.2 L813.72 401.2 L815.22 399 L816.72 401.2 L818.63 401.2 L823.55 401.2 L830.55 401.2 L832.05 399 L833.55 401.2 L834.5 401.2 L836 548.5 L837 548.5 L841.03 548.5 L842.78 550.8 L844.53 548.5 L845.17 548.5 L847.29 548.5 L851.93 548.5 L853.68 550.8 L855.43 548.5 L856.09 548.5 L861.17 548.5 L862.92 550.8 L864.67 548.5 L866.64 548.5 L874.47 548.5 L876.22 550.8 L877.97 548.5 L878.5 548.5 L880.25 550.8 L882 548.5 L883.56 548.5 L885.31 550.8 L887.06 548.5 L887.32 548.5 L889.07 550.8 L890.82 548.5 L892.64 548.5 L896.19 548.5 L897.94 550.8 L899.69 548.5 L901.53 548.5 L905.9 548.5 L907.7 506.5 L908.9 504.5 L909.9 504.5 L911.4 507 L912.9 504.5 L913.02 504.5 L914.52 507 L916.02 504.5 L916.87 504.5 L918.37 507 L919.87 504.5 L921.74 504.5 L923.24 507 L924.74 504.5 L926.35 504.5 L927.85 507 L929.35 504.5 L931.06 504.5 L932.56 507 L934.06 504.5 L935.78 504.5 L937.28 507 L938.78 504.5 L939.46 504.5 L940.96 507 L942.46 504.5 L944.32 504.5 L945.82 507 L947.32 504.5 L947.57 504.5 L949.07 507 L950.57 504.5 L951.05 504.5 L952.55 507 L954.05 504.5 L954.37 504.5 L955.87 507 L957.37 504.5 L957.78 504.5 L959.28 507 L960.78 504.5 L961.39 504.5 L965.13 504.5 L966.63 507 L968.13 504.5 L968.48 504.5 L969.98 507 L971.48 504.5 L971.52 504.5 L973.02 507 L974.52 504.5 L974.55 504.5 L980.5 504.5 L982 548.5 L983 548.5 L984.75 550.8 L986.5 548.5 L987.45 548.5 L990.09 548.5 L994.68 548.5 L996.43 550.8 L998.18 548.5 L999.85 548.5 L1001.6 550.8 L1003.35 548.5 L1004.36 548.5 L1012.26 548.5 L1014.01 550.8 L1015.76 548.5 L1017.42 548.5 L1023.24 548.5 L1024.99 550.8 L1026.74 548.5 L1027.43 548.5 L1029.18 550.8 L1030.93 548.5 L1031.19 548.5 L1032.94 550.8 L1034.69 548.5 L1036.17 548.5 L1037.92 550.8 L1039.67 548.5 L1040 548.5 L1041.75 550.8 L1043.5 548.5 L1045.18 548.5 L1051.21 548.5 L1052.96 550.8 L1054.71 548.5 L1052.3 548.5 L1054.1 501.8 L1055.3 499.8 L1056.3 499.8 L1057.8 502 L1059.3 499.8 L1060.22 499.8 L1061.72 502 L1063.22 499.8 L1064.11 499.8 L1065.61 502 L1067.11 499.8 L1069.03 499.8 L1074.32 499.8 L1075.82 502 L1077.32 499.8 L1079.25 499.8 L1080.75 502 L1082.25 499.8 L1082.96 499.8 L1084.46 502 L1085.96 499.8 L1086.72 499.8 L1088.22 502 L1089.72 499.8 L1090.73 499.8 L1092.23 502 L1093.73 499.8 L1094.74 499.8 L1096.24 502 L1097.74 499.8 L1098.27 499.8 L1099.77 502 L1101.27 499.8 L1102.07 499.8 L1103.57 502 L1105.07 499.8 L1105.11 499.8 L1106.61 502 L1108.11 499.8 L1108.58 499.8 L1110.08 502 L1111.58 499.8 L1112.64 499.8 L1118.58 499.8 L1123.2 499.8 L1124.7 548.5 L1125.7 548.5 L1127.45 550.8 L1129.2 548.5 L1129.85 548.5 L1132.75 548.5 L1138.61 548.5 L1140.36 550.8 L1142.11 548.5 L1143.78 548.5 L1149.54 548.5 L1156.42 548.5 L1158.17 550.8 L1159.92 548.5 L1160.96 548.5 L1167.97 548.5 L1174.93 548.5 L1182.29 548.5 L1188.45 548.5 L1190.2 550.8 L1191.95 548.5 L1192.01 548.5 L1193.76 550.8 L1195.51 548.5 L1196.23 548.5 L1197.98 550.8 L1199.73 548.5 L1196.8 548.5 L1198.6 497.2 L1199.8 495.2 L1200.8 495.2 L1206.57 495.2 L1212.65 495.2 L1214.67 495.2 L1221.16 495.2 L1226.37 495.2 L1228.77 495.2 L1232.28 495.2 L1233.78 493 L1235.28 495.2 L1235.81 495.2 L1239.04 495.2 L1246.9 495.2 L1251.19 495.2 L1257.3 495.2 L1263 495.2 L1265.46 495.2 L1266.96 493 L1268.46 495.2 L1268.2 495.2 L1269.7 548.5 L1270.7 548.5 L1274.53 548.5 L1276.6 548.5 L1278.35 550.8 L1280.1 548.5 L1280.64 548.5 L1286.79 548.5 L1290.54 548.5 L1295.33 548.5 L1297.08 550.8 L1298.83 548.5 L1299.06 548.5 L1302.26 548.5 L1309.88 548.5 L1311.63 550.8 L1313.38 548.5 L1314.29 548.5 L1322.1 548.5 L1323.85 550.8 L1325.6 548.5 L1326.14 548.5 L1327.89 550.8 L1329.64 548.5 L1331.53 548.5 L1333.28 550.8 L1335.03 548.5 L1336.19 548.5 L1337.94 550.8 L1339.69 548.5 L1340.2 548.5 L1342 500 L1343.2 498" fill="none" stroke="#f6f600" stroke-width="1.1" stroke-linejoin="miter"/><path d="M22.5 760 L23.5 760 L24 679.5 L26.4 672.5 L27.61 672.5 L29.59 679.5 L30.7 679.5 L31.5 672.5 L33.14 672.5 L34.45 679.5 L36.2 679.5 L37.18 672.5 L39.29 672.5 L39.93 679.5 L41.46 679.5 L41.46 679.5 L53.35 679.5 L54.9 672.5 L55.31 672.5 L56.79 679.5 L56.83 679.5 L57.42 672.5 L58.05 672.5 L58.86 679.5 L58.92 679.5 L60.13 672.5 L61.48 672.5 L63.32 679.5 L64.73 679.5 L66.29 672.5 L67.02 672.5 L68.25 679.5 L70.44 679.5 L72.29 672.5 L73.11 672.5 L74.74 679.5 L75.24 679.5 L75.86 672.5 L76.9 672.5 L78.62 679.5 L80.49 679.5 L82.52 672.5 L82.52 672.5 L84.38 679.5 L84.84 679.5 L86.09 672.5 L87.12 672.5 L89.19 679.5 L89.35 679.5 L91.1 672.5 L91.32 672.5 L92.26 679.5 L92.99 679.5 L94.7 672.5 L95.34 672.5 L96.03 679.5 L96.25 679.5 L98.03 672.5 L99.48 672.5 L100.27 679.5 L101.25 679.5 L102.92 672.5 L104.6 672.5 L105.3 679.5 L105.56 679.5 L106.4 672.5 L108.93 672.5 L109.86 679.5 L111.63 679.5 L113.54 672.5 L114.57 672.5 L115.4 679.5 L117.28 679.5 L117.94 672.5 L118.5 672.5 L120.58 679.5 L121.15 679.5 L122.18 672.5 L122.37 672.5 L123.34 679.5 L123.54 679.5 L124.43 672.5 L125.39 672.5 L126.86 679.5 L127.85 679.5 L129.13 672.5 L131.38 672.5 L132.8 679.5 L133.2 679.5 L135.15 672.5 L135.8 672.5 L137.61 679.5 L138.03 679.5 L140.03 672.5 L142.5 672.5 L143.32 679.5 L145.26 679.5 L146.43 672.5 L146.53 672.5 L147.2 679.5 L149.32 679.5 L150.95 672.5 L153.09 672.5 L154 679.5 L155.31 679.5 L156.09 672.5 L156.27 672.5 L157.92 679.5 L158.43 679.5 L160.29 672.5 L161.02 672.5 L162.5 679.5 L164.52 679.5 L165.05 672.5 L166.2 672.5 L167.14 679.5 L167.27 679.5 L168.36 672.5 L168.7 672.5 L170.12 679.5 L170.91 679.5 L172.98 672.5 L174.78 672.5 L176.33 679.5 L177.62 679.5 L178.17 672.5 L180.54 672.5 L181.07 679.5 L182.61 679.5 L183.14 672.5 L184.4 672.5 L185.91 679.5 L187.52 679.5 L189.62 672.5 L191.04 672.5 L191.66 679.5 L193.28 679.5 L194.96 672.5 L197.02 672.5 L198.65 679.5 L200.66 679.5 L202.26 672.5 L204.52 672.5 L206.47 679.5 L207.38 679.5 L209.26 672.5 L210.89 672.5 L212.31 679.5 L213.15 679.5 L214.62 672.5 L216.28 672.5 L216.91 679.5 L219.1 679.5 L220.76 672.5 L222.67 672.5 L223.8 679.5 L225.07 679.5 L226.91 672.5 L228.87 672.5 L229.5 679.5 L229.57 679.5 L230.83 672.5 L232.65 672.5 L233.52 679.5 L234.61 679.5 L236.59 672.5 L236.61 672.5 L237.52 679.5 L238.19 679.5 L239.01 672.5 L241.37 672.5 L242.14 679.5 L243.59 679.5 L245.52 672.5 L247.25 672.5 L248.27 679.5 L248.71 679.5 L250.5 672.5 L252.78 672.5 L254.75 679.5 L255.59 679.5 L256.6 672.5 L257.89 672.5 L258.61 679.5 L260.45 679.5 L262.09 672.5 L262.81 672.5 L264.83 679.5 L265.2 679.5 L266.14 672.5 L267.22 672.5 L268.06 679.5 L269.44 679.5 L270.44 672.5 L272.99 672.5 L274.84 679.5 L275.83 679.5 L276.38 672.5 L276.49 672.5 L278.39 679.5 L279.95 679.5 L280.94 672.5 L280.99 672.5 L282.76 679.5 L283.05 679.5 L283.59 672.5 L284.21 672.5 L286.04 679.5 L286.35 679.5 L286.35 679.5 L296.12 679.5 L297.63 672.5 L299.73 672.5 L301.28 679.5 L303.39 679.5 L304.21 672.5 L304.67 672.5 L305.93 679.5 L305.96 679.5 L307.6 672.5 L308.31 672.5 L309.09 679.5 L309.85 679.5 L310 672.5 L311 679 L312 759.8 L330.7 759.8 L330.9 759.8 L332.2 753.2 L333.5 759.8 L347.1 759.8 L347.3 759.8 L348.6 753.2 L349.9 759.8 L369.7 759.8 L369.9 759.8 L371.2 753.2 L372.5 759.8 L394.5 759.8 L394.7 759.8 L396 753.2 L397.3 759.8 L398 759.8 L399.3 753.2 L400.6 759.8 L401.3 759.8 L402.6 753.2 L403.9 759.8 L404.6 759.8 L405.9 753.2 L407.2 759.8 L413.3 759.8 L413.5 759.8 L414.8 753.2 L416.1 759.8 L428.5 759.8 L428.7 759.8 L430 753.2 L431.3 759.8 L432 759.8 L433.3 753.2 L434.6 759.8 L435.3 759.8 L436.6 753.2 L437.9 759.8 L453.1 759.8 L453.3 759.8 L454.6 753.2 L455.9 759.8 L458.5 759.8 L458.7 759.8 L460 753.2 L461.3 759.8 L462 759.8 L463.3 753.2 L464.6 759.8 L465.3 759.8 L466.6 753.2 L467.9 759.8 L498.5 759.8 L498.7 759.8 L500 753.2 L501.3 759.8 L506.5 759.8 L506.7 759.8 L508 753.2 L509.3 759.8 L522.2 759.8 L522.4 759.8 L523.7 753.2 L525 759.8 L525.7 759.8 L527 753.2 L528.3 759.8 L529 759.8 L530.3 753.2 L531.6 759.8 L532.3 759.8 L533.6 753.2 L534.9 759.8 L543.1 759.8 L543.3 759.8 L544.6 753.2 L545.9 759.8 L546.6 759.8 L547.9 753.2 L549.2 759.8 L549.9 759.8 L551.2 753.2 L552.5 759.8 L553.2 759.8 L554.5 753.2 L555.8 759.8 L556.5 759.8 L557.8 753.2 L559.1 759.8 L580.8 759.8 L581 759.8 L582.3 753.2 L583.6 759.8 L599.1 759.8 L599.3 759.8 L600.6 753.2 L601.9 759.8 L634.3 759.8 L634.5 759.8 L635.8 753.2 L637.1 759.8 L637.8 759.8 L639.1 753.2 L640.4 759.8 L641.1 759.8 L642.4 753.2 L643.7 759.8 L652.5 759.8 L652.7 759.8 L654 753.2 L655.3 759.8 L656 759.8 L657.3 753.2 L658.6 759.8 L659.3 759.8 L660.6 753.2 L661.9 759.8 L666.7 759.8 L666.9 759.8 L668.2 753.2 L669.5 759.8 L675.9 759.8 L676.1 759.8 L677.4 753.2 L678.7 759.8 L679.4 759.8 L680.7 753.2 L682 759.8 L682.7 759.8 L684 753.2 L685.3 759.8 L700.5 759.8 L700.7 759.8 L702 753.2 L703.3 759.8 L704 759.8 L705.3 753.2 L706.6 759.8 L729.3 759.8 L729.5 759.8 L730.8 753.2 L732.1 759.8 L732.8 759.8 L734.1 753.2 L735.4 759.8 L736.1 759.8 L737.4 753.2 L738.7 759.8 L739.4 759.8 L740.7 753.2 L742 759.8 L765.8 759.8 L766 759.8 L767.3 753.2 L768.6 759.8 L769.3 759.8 L770.6 753.2 L771.9 759.8 L772.6 759.8 L773.9 753.2 L775.2 759.8 L795.7 759.8 L795.9 759.8 L797.2 753.2 L798.5 759.8 L810.1 759.8 L810.3 759.8 L811.6 753.2 L812.9 759.8 L823.1 759.8 L823.3 759.8 L824.6 753.2 L825.9 759.8 L853.1 759.8 L853.3 759.8 L854.6 753.2 L855.9 759.8 L866.1 759.8 L866.3 759.8 L867.6 753.2 L868.9 759.8 L869.6 759.8 L870.9 753.2 L872.2 759.8 L872.9 759.8 L874.2 753.2 L875.5 759.8 L876.2 759.8 L877.5 753.2 L878.8 759.8 L889.5 759.8 L889.7 759.8 L891 753.2 L892.3 759.8 L900 759.8 L900.2 759.8 L901.5 753.2 L902.8 759.8 L915.5 759.8 L915.7 759.8 L917 753.2 L918.3 759.8 L919 759.8 L920.3 753.2 L921.6 759.8 L922.3 759.8 L923.6 753.2 L924.9 759.8 L943 759.8 L943.2 759.8 L944.5 753.2 L945.8 759.8 L970.4 759.8 L970.6 759.8 L971.9 753.2 L973.2 759.8 L980.8 759.8 L981 759.8 L982.3 753.2 L983.6 759.8 L996.5 759.8 L996.7 759.8 L998 753.2 L999.3 759.8 L1011 759.8 L1011.2 759.8 L1012.5 753.2 L1013.8 759.8 L1025.4 759.8 L1025.6 759.8 L1026.9 753.2 L1028.2 759.8 L1035.8 759.8 L1036 759.8 L1037.3 753.2 L1038.6 759.8 L1039.3 759.8 L1040.6 753.2 L1041.9 759.8 L1042.6 759.8 L1043.9 753.2 L1045.2 759.8 L1045.9 759.8 L1047.2 753.2 L1048.5 759.8 L1065.8 759.8 L1066 759.8 L1067.3 753.2 L1068.6 759.8 L1069.3 759.8 L1070.6 753.2 L1071.9 759.8 L1085.3 759.8 L1085.5 759.8 L1086.8 753.2 L1088.1 759.8 L1091.8 759.8 L1092 759.8 L1093.3 753.2 L1094.6 759.8 L1099.7 759.8 L1099.9 759.8 L1101.2 753.2 L1102.5 759.8 L1120.5 759.8 L1120.7 759.8 L1122 753.2 L1123.3 759.8 L1134.8 759.8 L1135 759.8 L1136.3 753.2 L1137.6 759.8 L1138.3 759.8 L1139.6 753.2 L1140.9 759.8 L1141.6 759.8 L1142.9 753.2 L1144.2 759.8 L1144.9 759.8 L1146.2 753.2 L1147.5 759.8 L1157 759.8 L1157.2 759.8 L1158.5 753.2 L1159.8 759.8 L1160.5 759.8 L1161.8 753.2 L1163.1 759.8 L1163.8 759.8 L1165.1 753.2 L1166.4 759.8 L1167.1 759.8 L1168.4 753.2 L1169.7 759.8 L1170.4 759.8 L1171.7 753.2 L1173 759.8 L1189.5 759.8 L1189.7 759.8 L1191 753.2 L1192.3 759.8 L1206.5 759.8 L1206.7 759.8 L1208 753.2 L1209.3 759.8 L1227.4 759.8 L1227.6 759.8 L1228.9 753.2 L1230.2 759.8 L1230.9 759.8 L1232.2 753.2 L1233.5 759.8 L1234.2 759.8 L1235.5 753.2 L1236.8 759.8 L1257.3 759.8 L1257.5 759.8 L1258.8 753.2 L1260.1 759.8 L1284.7 759.8 L1284.9 759.8 L1286.2 753.2 L1287.5 759.8 L1300.3 759.8 L1300.5 759.8 L1301.8 753.2 L1303.1 759.8 L1313.4 759.8 L1313.6 759.8 L1314.9 753.2 L1316.2 759.8 L1322.5 759.8 L1322.7 759.8 L1324 753.2 L1325.3 759.8 L1326 759.8 L1327.3 753.2 L1328.6 759.8 L1329.3 759.8 L1330.6 753.2 L1331.9 759.8 L1332.6 759.8 L1333.9 753.2 L1335.2 759.8 L1343 759.8" fill="none" stroke="#00e4ee" stroke-width="1.1"/><rect x="302" y="721" width="5" height="2" fill="#00b0e8"/><path d="M301 269 H320 V290 L310.6 294.5 L301 290Z" fill="#ffff00" stroke="#1a1a3a" stroke-width="0.8"/><path d="M304 273 H316.5 M310.5 273 V290" stroke="#333" stroke-width="1.3" fill="none"/><path d="M-2 535 H11 L22.6 548 L11 561.7 H-2Z" fill="#ffff00" stroke="#1a1a3a" stroke-width="0.8"/><path d="M-2 741 H11 L22.6 754.4 L11 768 H-2Z" fill="#00ffff" stroke="#3a1a1a" stroke-width="0.8"/><text x="0.8" y="554" font-family="Liberation Serif" font-size="17" fill="#3a2a10">1</text><text x="-0.5" y="760" font-family="Liberation Serif" font-size="17" fill="#2a1a1a">2</text><path d="M196.1 452 L183.3 475.8 M190.7 465.2 L190.7 500.5 M202.1 455.5 L226 455.5 M196.3 463.6 L232.3 463.6 M202.1 470.8 L226 470.8 M202.1 478.8 L226 478.8 M202.3 500.5 L202.3 486.6 L225.4 486.6 L225.4 500.5 M202.3 496.7 L225.4 496.7 M249.6 466.7 L249.6 454.8 L276.5 454.8 L276.5 466.7 L249.6 466.7 M239.5 473.7 L286.7 473.7 M256.5 474.7 L248.7 486.9 M251.1 482.7 L277.3 482.7 L276.1 494.2 L273.6 497.7 L270.1 498.4 L263.4 498.4" fill="none" stroke="#ffff00" stroke-width="2.6" stroke-linecap="butt" stroke-linejoin="miter"/><path d="M214 700.6 L201.2 724.4 M208.6 713.8 L208.6 749.1 M220 704.1 L243.9 704.1 M214.2 712.2 L250.2 712.2 M220 719.4 L243.9 719.4 M220 727.4 L243.9 727.4 M220.2 749.1 L220.2 735.2 L243.3 735.2 L243.3 749.1 M220.2 745.3 L243.3 745.3 M267.5 715.3 L267.5 703.4 L294.4 703.4 L294.4 715.3 L267.5 715.3 M257.4 722.3 L304.6 722.3 M274.4 723.3 L266.6 735.5 M269 731.3 L295.2 731.3 L294 742.8 L291.5 746.3 L288 747 L281.3 747" fill="none" stroke="#10b0f0" stroke-width="2.6" stroke-linecap="butt" stroke-linejoin="miter"/></svg><div class="t" style="left:81.63px;top:454.68px;font-family:'Liberation Sans', sans-serif;font-size:50px;color:#ffff00;transform:scaleX(0.9350);transform-origin:0 0;">OUT</div><div class="t" style="left:63.81px;top:703.7px;font-family:'Liberation Sans', sans-serif;font-size:49.5px;color:#10b0f0;transform:scaleX(0.8225);transform-origin:0 0;">RESET</div><div class="t" style="left:332.02px;top:576.52px;font-family:'Liberation Sans', sans-serif;font-size:40.5px;color:#fff;transform:scaleX(0.9879);transform-origin:0 0;">63Hz</div><div class="t" style="left:472.42px;top:576.52px;font-family:'Liberation Sans', sans-serif;font-size:40.5px;color:#fff;transform:scaleX(0.9946);transform-origin:0 0;">160Hz</div><div class="t" style="left:617.61px;top:576.52px;font-family:'Liberation Sans', sans-serif;font-size:40.5px;color:#fff;transform:scaleX(0.9877);transform-origin:0 0;">400Hz</div><div class="t" style="left:772.5px;top:579.92px;font-family:'Liberation Sans', sans-serif;font-size:40.5px;color:#fff;">1kHz</div><div class="t" style="left:899.71px;top:578.52px;font-family:'Liberation Sans', sans-serif;font-size:40.5px;color:#fff;transform:scaleX(0.9967);transform-origin:0 0;">2.5kHz</div><div class="t" style="left:1041.99px;top:577.82px;font-family:'Liberation Sans', sans-serif;font-size:40.5px;color:#fff;transform:scaleX(1.0069);transform-origin:0 0;">6.25kHz</div><div class="t" style="left:1205.82px;top:576.32px;font-family:'Liberation Sans', sans-serif;font-size:40.5px;color:#fff;transform:scaleX(0.9918);transform-origin:0 0;">16kHz</div><div class="r" style="left:-38px;top:814px;width:228px;height:83px;background:#383838;border:2px solid #287468;border-right:1px solid #1f9a88;box-sizing:border-box"></div><div class="r" style="left:-32px;top:820px;width:216px;height:71px;background:#2b2f2f;"></div><div class="r" style="left:196px;top:814px;width:228px;height:83px;background:#383838;border:2px solid #287468;border-right:1px solid #1f9a88;box-sizing:border-box"></div><div class="r" style="left:202px;top:820px;width:216px;height:71px;background:#2b2f2f;"></div><div class="r" style="left:1301px;top:814px;width:99px;height:83px;background:#383838;border:2px solid #287468;border-right:1px solid #1f9a88;box-sizing:border-box"></div><div class="r" style="left:1307px;top:820px;width:87px;height:71px;background:#2b2f2f;"></div><div class="t" style="left:-33.7px;top:819.58px;font-family:'Liberation Serif', serif;font-size:22px;color:#ffff00;transform:scaleX(0.9800);transform-origin:0 0;">CH1</div><div class="t" style="left:107.03px;top:819.58px;font-family:'Liberation Serif', serif;font-size:22px;color:#ffff00;transform:scaleX(0.9727);transform-origin:0 0;">X10&nbsp;&nbsp;DC</div><div class="t" style="left:121.03px;top:842.38px;font-family:'Liberation Serif', serif;font-size:22px;color:#ffff00;transform:scaleX(0.9375);transform-origin:0 0;">1 V/div</div><div class="t" style="left:98.54px;top:865.08px;font-family:'Liberation Serif', serif;font-size:22px;color:#ffff00;transform:scaleX(0.9586);transform-origin:0 0;">38.46 mV</div><div class="t" style="left:201.84px;top:819.58px;font-family:'Liberation Serif', serif;font-size:22px;color:#00ffff;transform:scaleX(0.9625);transform-origin:0 0;">CH2</div><div class="t" style="left:341.53px;top:819.58px;font-family:'Liberation Serif', serif;font-size:22px;color:#00ffff;transform:scaleX(0.9675);transform-origin:0 0;">X10&nbsp;&nbsp;DC</div><div class="t" style="left:354.05px;top:842.38px;font-family:'Liberation Serif', serif;font-size:22px;color:#00ffff;transform:scaleX(0.9538);transform-origin:0 0;">2 V/div</div><div class="t" style="left:352.44px;top:865.08px;font-family:'Liberation Serif', serif;font-size:22px;color:#00ffff;transform:scaleX(0.9636);transform-origin:0 0;">-7.96 V</div><div class="t" style="left:1308px;top:819.58px;font-family:'Liberation Serif', serif;font-size:22px;color:#ffff00;transform:scaleX(0.9800);transform-origin:0 0;">Time</div><div class="t" style="left:1307.54px;top:865.08px;font-family:'Liberation Serif', serif;font-size:22px;color:#ffff00;transform:scaleX(0.9800);transform-origin:0 0;">12K</div><div class="r" style="left:0px;top:909px;width:1343px;height:2px;background:#23998a;"></div><div class="r" style="left:0px;top:915px;width:1343px;height:48px;background:#2b2f2f;"></div><div class="r" style="left:0px;top:967px;width:1343px;height:2px;background:#267265;"></div><div class="t" style="left:-34.78px;top:914.58px;font-family:'Liberation Serif', serif;font-size:22px;color:#ffff00;transform:scaleX(0.9700);transform-origin:0 0;">Vmin= -25.392 mV</div><div class="t" style="left:183.44px;top:914.58px;font-family:'Liberation Serif', serif;font-size:22px;color:#ffff00;transform:scaleX(0.9603);transform-origin:0 0;">Vmax= 2.743 V</div><div class="t" style="left:398.74px;top:914.58px;font-family:'Liberation Serif', serif;font-size:22px;color:#ffff00;transform:scaleX(0.9584);transform-origin:0 0;">Vpp= 2.768 V</div><div class="t" style="left:614.24px;top:914.58px;font-family:'Liberation Serif', serif;font-size:22px;color:#ffff00;transform:scaleX(0.9615);transform-origin:0 0;">Vrms= 899.452 mV</div><div class="t" style="left:829.22px;top:914.58px;font-family:'Liberation Serif', serif;font-size:22px;color:#ffff00;transform:scaleX(0.9779);transform-origin:0 0;">F= 150.150 Hz</div><div class="t" style="left:-34.25px;top:937.58px;font-family:'Liberation Serif', serif;font-size:22px;color:#00ffff;transform:scaleX(0.9700);transform-origin:0 0;">Vmin= -233.434 mV</div><div class="t" style="left:183.44px;top:937.58px;font-family:'Liberation Serif', serif;font-size:22px;color:#00ffff;transform:scaleX(0.9603);transform-origin:0 0;">Vmax= 3.181 V</div><div class="t" style="left:398.74px;top:937.58px;font-family:'Liberation Serif', serif;font-size:22px;color:#00ffff;transform:scaleX(0.9584);transform-origin:0 0;">Vpp= 3.414 V</div><div class="t" style="left:614.23px;top:937.58px;font-family:'Liberation Serif', serif;font-size:22px;color:#00ffff;transform:scaleX(0.9688);transform-origin:0 0;">F= 0.000 Hz</div>
</body></html>
